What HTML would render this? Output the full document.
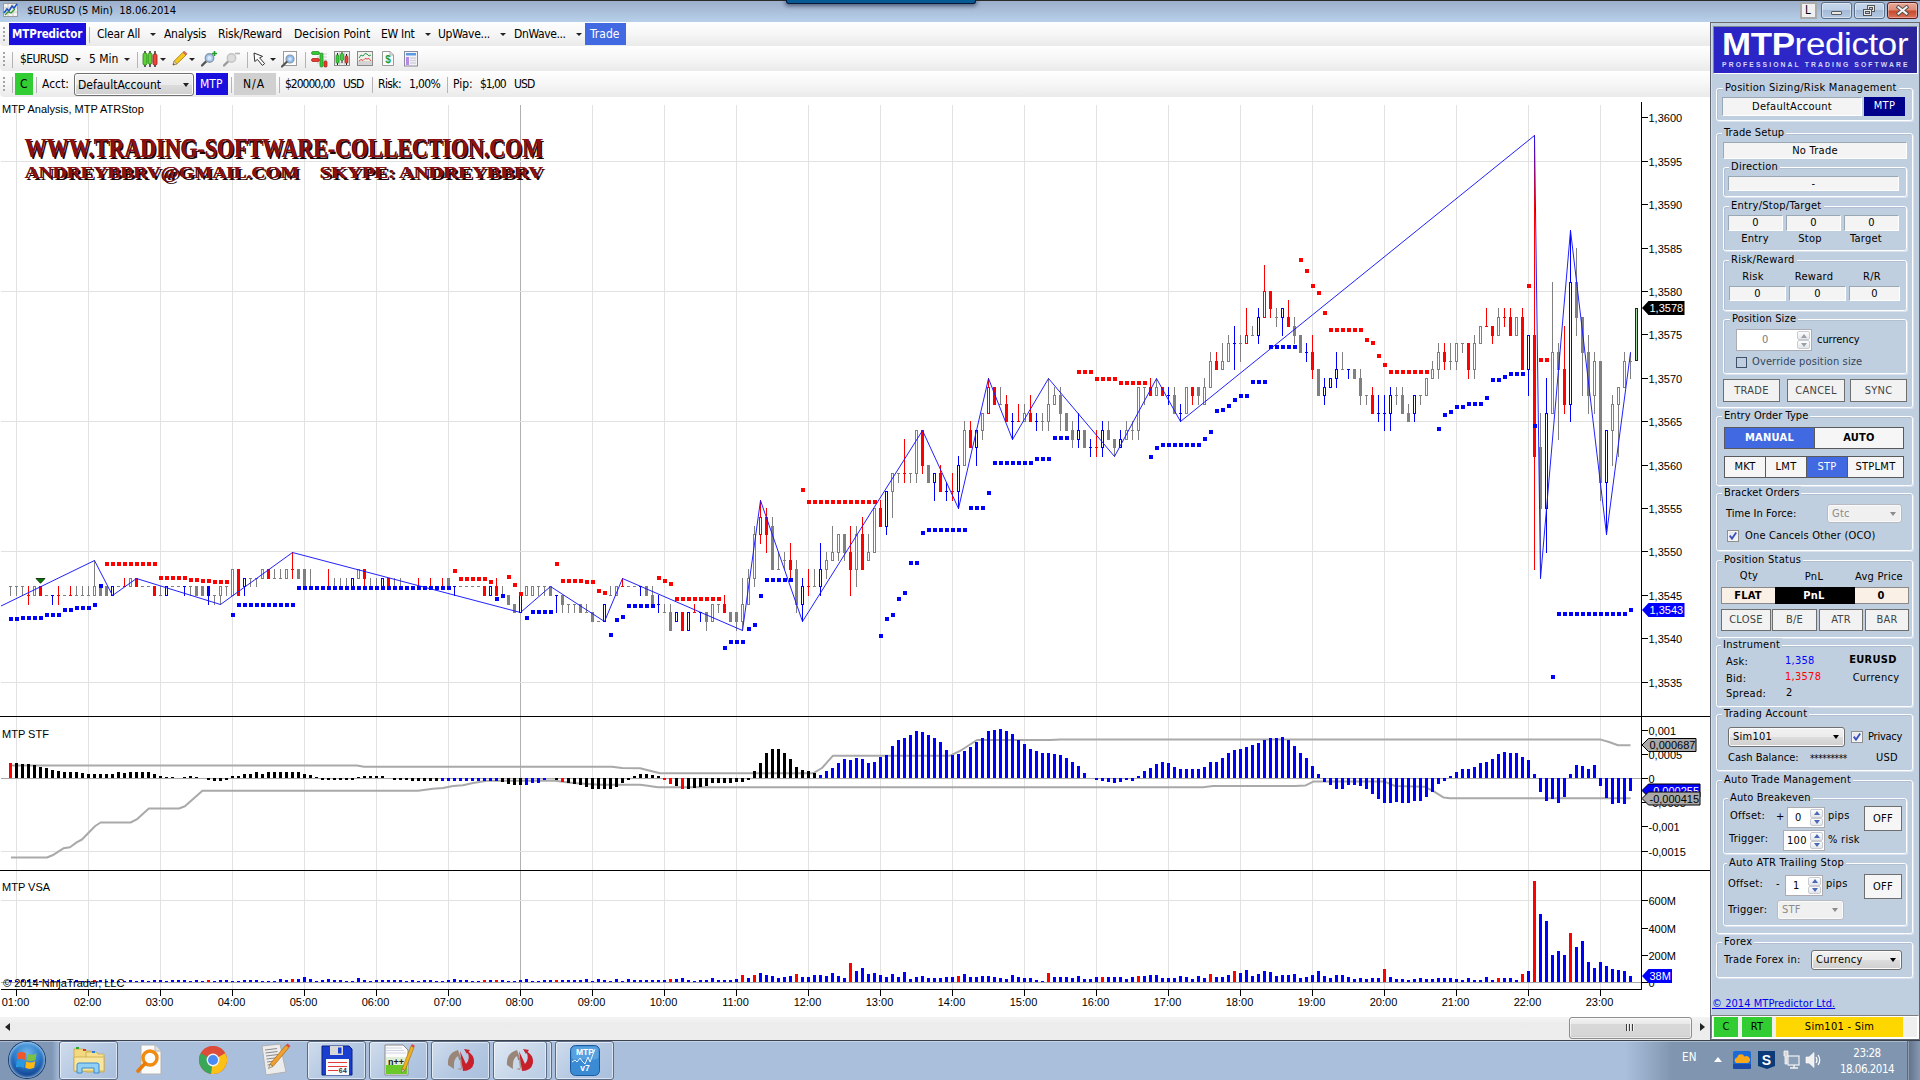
<!DOCTYPE html>
<html lang="en"><head><meta charset="utf-8"><title>$EURUSD (5 Min) 18.06.2014</title>
<style>
html,body{margin:0;padding:0;}
body{width:1920px;height:1080px;overflow:hidden;position:relative;background:#fff;font-family:"DejaVu Sans Condensed","Liberation Sans",sans-serif;font-size:11px;letter-spacing:.27px;color:#000;}
.a{position:absolute;white-space:pre;}
.t{position:absolute;white-space:pre;line-height:14px;height:14px;}
.c{text-align:center;}
#titlebar{left:0;top:0;width:1920px;height:22px;background:linear-gradient(#9cb0cb 0,#a6bad5 35%,#b1c8e3 75%,#b8d0ea 100%);border-top:1px solid #2b2b2b;box-sizing:border-box;}
.tb{left:0;width:1710px;height:24px;background:linear-gradient(#fefefe 0,#f6f6f6 50%,#eaeaea 100%);border-radius:4px 0 0 4px;}
.tbt,svg{letter-spacing:0;}
.tbt{font-family:"DejaVu Sans Condensed","Liberation Sans",sans-serif;font-size:12px;line-height:16px;}
.grip{width:2px;height:15px;background:repeating-linear-gradient(#a4a4a4 0,#a4a4a4 2px,transparent 2px,transparent 4px);}
.sep{width:1px;height:16px;background:#b4b4b4;}
.dd{width:0;height:0;border-left:3px solid transparent;border-right:3px solid transparent;border-top:3px solid #222;}
.ax{font-family:"Liberation Sans",sans-serif;font-size:11px;line-height:12px;}
/* right panel */
#panel{left:1709px;top:22px;width:211px;height:1018px;background:#c0cfe0;}
.gb{position:absolute;border:1px solid #fff;border-radius:2.5px;box-shadow:inset 1px 1px 0 #b0bfd2, 1px 1px 0 #d9e2ee;}
.gl{position:absolute;background:#c0cfe0;padding:0 2px;line-height:13px;white-space:pre;}
.fld{position:absolute;background:#f4f4f4;border:1px solid #9aa7b5;border-right-color:#fff;border-bottom-color:#fff;box-sizing:border-box;text-align:center;line-height:13px;}
.btn{position:absolute;background:#f2f2f2;border:1px solid #6f6f6f;box-sizing:border-box;text-align:center;color:#444;}
.spin{position:absolute;background:#fff;border:1px solid #abadb3;box-sizing:border-box;}
.tkb{box-sizing:border-box;border:1px solid #5b6c84;border-radius:3px;background:linear-gradient(135deg,#cfdcec 0,#b4c8e2 55%,#a9bfdc 100%);box-shadow:inset 0 0 0 1px rgba(255,255,255,.55);}
.wm{font-family:'Liberation Serif','DejaVu Serif',serif;font-weight:bold;color:#8e1010;text-shadow:1.5px 1.5px 0 #1a0505,-0.5px -0.5px 0 #3a0a0a;transform-origin:0 0;letter-spacing:0;}
</style></head><body>
<!-- ===== title bar ===== -->
<div id="titlebar" class="a"></div>
<div class="a" style="left:786px;top:0;width:190px;height:4px;background:#055a94;border:1px solid #08183a;border-top:0;border-radius:0 0 3px 3px;box-sizing:border-box;box-shadow:0 1px 4px 1px rgba(10,20,50,.55);"></div>
<svg class="a" style="left:3px;top:3px" width="16" height="15" viewBox="0 0 16 15"><rect x="0.5" y="0.5" width="14" height="13" fill="#f4f4f0" stroke="#9a9a9a"/><path d="M1 5h13M1 9h13M5 1v12M10 1v12" stroke="#c9c9c9" stroke-width="1"/><path d="M1 10 L4 6 L6 8 L9 3 L11 5 L14 1" fill="none" stroke="#1a50c8" stroke-width="1.6"/><path d="M2 12 L5 9 L8 10 L12 6" fill="none" stroke="#2a9a2a" stroke-width="1.2"/></svg>
<div class="t" style="left:27px;top:4px;font-size:11.2px;letter-spacing:-0.08px;">$EURUSD (5 Min)  18.06.2014</div>
<!-- window buttons -->
<div class="a" style="left:1800px;top:2px;width:17px;height:17px;background:#f0f0f0;border:2px solid #a9a9a9;box-sizing:border-box;"></div>
<div class="t" style="left:1805px;top:3px;font-size:11.5px;">L</div>
<div class="a" style="left:1821px;top:2px;width:31px;height:17px;border:1px solid #5b6f8a;border-radius:3px;box-sizing:border-box;background:linear-gradient(#c5d6ea 0,#bccfe6 50%,#a3bad6 50%,#b5c9e2 100%);box-shadow:inset 0 0 0 1px rgba(255,255,255,.45);"></div>
<div class="a" style="left:1831px;top:11px;width:11px;height:4px;background:#e8e8e8;border:1px solid #5a5a5a;border-radius:1px;box-sizing:border-box;"></div>
<div class="a" style="left:1854px;top:2px;width:31px;height:17px;border:1px solid #5b6f8a;border-radius:3px;box-sizing:border-box;background:linear-gradient(#c5d6ea 0,#bccfe6 50%,#a3bad6 50%,#b5c9e2 100%);box-shadow:inset 0 0 0 1px rgba(255,255,255,.45);"></div>
<svg class="a" style="left:1863px;top:5px" width="13" height="12" viewBox="0 0 13 12"><rect x="4.5" y="0.5" width="7" height="6" fill="#e8e8e8" stroke="#555"/><rect x="6.5" y="2.5" width="3" height="2" fill="#b9cbe2" stroke="#555"/><rect x="0.5" y="4.5" width="8" height="6" fill="#e8e8e8" stroke="#555"/><rect x="2.5" y="6.5" width="4" height="2" fill="#b9cbe2" stroke="#555"/></svg>
<div class="a" style="left:1887px;top:2px;width:31px;height:17px;border:1px solid #5a1a1a;border-radius:3px;box-sizing:border-box;background:linear-gradient(#e8a898 0,#dc8a76 48%,#c8482a 52%,#d9725a 100%);box-shadow:inset 0 0 0 1px rgba(255,255,255,.35);"></div>
<svg class="a" style="left:1896px;top:5px" width="13" height="11" viewBox="0 0 13 11"><path d="M2.500 2.200 L10.500 8.600 M10.500 2.200 L2.500 8.600" stroke="#4a4a4a" stroke-width="3.800" stroke-linecap="square"/><path d="M2.500 2.200 L10.500 8.600 M10.500 2.200 L2.500 8.600" stroke="#f2f2f2" stroke-width="2.100" stroke-linecap="square"/></svg>

<!-- ===== toolbar row 1 ===== -->
<div class="a tb" style="top:22px;"></div>
<div class="a grip" style="left:3px;top:27px;"></div>
<div class="a" style="left:9px;top:23px;width:77px;height:22px;background:#1a0fdc;"></div>
<div class="t tbt" style="left:12px;top:26px;color:#fff;font-weight:bold;font-size:11.5px;letter-spacing:-0.1px">MTPredictor</div>
<div class="a sep" style="left:89px;top:27px;"></div>
<div class="t tbt" style="left:97px;top:26px;letter-spacing:-0.22px;">Clear All</div>
<div class="a dd" style="left:150px;top:33px;"></div>
<div class="t tbt" style="left:164px;top:26px;letter-spacing:-0.3px;">Analysis</div>
<div class="t tbt" style="left:218px;top:26px;letter-spacing:-0.2px;">Risk/Reward</div>
<div class="t tbt" style="left:294px;top:26px;">Decision Point</div>
<div class="t tbt" style="left:381px;top:26px;letter-spacing:-0.28px;">EW Int</div>
<div class="a dd" style="left:425px;top:33px;"></div>
<div class="t tbt" style="left:438px;top:26px;letter-spacing:-0.29px;">UpWave...</div>
<div class="a dd" style="left:500px;top:33px;"></div>
<div class="t tbt" style="left:514px;top:26px;letter-spacing:-0.38px;">DnWave...</div>
<div class="a dd" style="left:576px;top:33px;"></div>
<div class="a" style="left:585px;top:23px;width:41px;height:22px;background:#4169e1;"></div>
<div class="t tbt" style="left:590px;top:26px;color:#fff;">Trade</div>

<!-- ===== toolbar row 2 ===== -->
<div class="a tb" style="top:47px;"></div>
<div class="a grip" style="left:3px;top:52px;"></div>
<div class="a sep" style="left:12px;top:52px;"></div>
<div class="t tbt" style="left:20px;top:51px;letter-spacing:-0.6px;">$EURUSD</div>
<div class="a dd" style="left:75px;top:58px;"></div>
<div class="t tbt" style="left:89px;top:51px;">5 Min</div>
<div class="a dd" style="left:124px;top:58px;"></div>
<div class="a sep" style="left:137px;top:52px;"></div>
<!-- candles icon -->
<svg class="a" style="left:142px;top:51px" width="16" height="17" viewBox="0 0 16 17"><path d="M3 0v16M8 0v16M13 0v16" stroke="#222" stroke-width="1.4"/><rect x="1" y="2" width="4" height="12" rx="1.5" fill="#5fd23a" stroke="#2a7a18" stroke-width=".8"/><rect x="6" y="2" width="4" height="11" rx="1.5" fill="#5fd23a" stroke="#2a7a18" stroke-width=".8"/><rect x="11" y="3" width="4" height="11" rx="1.5" fill="#f0463a" stroke="#8a1a12" stroke-width=".8"/></svg>
<div class="a dd" style="left:160px;top:58px;"></div>
<!-- pencil -->
<svg class="a" style="left:171px;top:51px" width="17" height="16" viewBox="0 0 17 16"><path d="M2 14 L3.2 10 L12 1.2 L15 4 L6 12.8 Z" fill="#f4c81e" stroke="#a8780a" stroke-width=".8"/><path d="M12 1.2 L13.4 0.2 L16 2.8 L15 4 Z" fill="#e87a6a" stroke="#a8483a" stroke-width=".6"/><path d="M2 14 L3.2 10 L6 12.8 Z" fill="#e8d8b8" stroke="#8a7a5a" stroke-width=".6"/><path d="M2 14 L2.6 12.2 L3.8 13.4Z" fill="#444"/></svg>
<div class="a dd" style="left:189px;top:58px;"></div>
<!-- zoom in -->
<svg class="a" style="left:201px;top:50px" width="17" height="17" viewBox="0 0 17 17"><path d="M1 15.5 L6 10.5" stroke="#555" stroke-width="2.4" stroke-linecap="round"/><circle cx="8.5" cy="8" r="4.2" fill="#a8cdf0" stroke="#8a98a8" stroke-width="1.4"/><circle cx="8.5" cy="8" r="2" fill="#dbeafa"/><path d="M13.5 1v5M11 3.5h5" stroke="#1f9a2f" stroke-width="1.6"/></svg>
<svg class="a" style="left:223px;top:50px" width="18" height="17" viewBox="0 0 18 17"><path d="M1 15.5 L6 10.5" stroke="#9a9a9a" stroke-width="2.4" stroke-linecap="round"/><circle cx="8.5" cy="8" r="4.2" fill="#dcdcdc" stroke="#c4c4c4" stroke-width="1.4"/><path d="M12 3.5h5" stroke="#b4b4b4" stroke-width="1.6"/></svg>
<div class="a sep" style="left:247px;top:52px;"></div>
<!-- cursor -->
<svg class="a" style="left:253px;top:52px" width="14" height="15" viewBox="0 0 14 15"><path d="M1 1 L1.8 9.5 L4.4 7.4 L9.4 13.4 L11.6 11.6 L6.6 5.8 L9.6 4.4 Z" fill="#fff" stroke="#333" stroke-width="1"/></svg>
<div class="a dd" style="left:270px;top:58px;"></div>
<!-- zoom box -->
<svg class="a" style="left:281px;top:50px" width="17" height="18" viewBox="0 0 17 18"><rect x="2.5" y="1.5" width="13" height="14" fill="#fdfdfd" stroke="#9a9a9a"/><circle cx="9" cy="9" r="4" fill="#8fbef0" stroke="#8a98a8" stroke-width="1.2"/><circle cx="9" cy="9" r="1.8" fill="#d4e6fa"/><path d="M1 16.5 L5.6 12" stroke="#555" stroke-width="2.2" stroke-linecap="round"/></svg>
<div class="a sep" style="left:305px;top:52px;"></div>
<!-- icon: orders/bars -->
<svg class="a" style="left:311px;top:50px" width="17" height="18" viewBox="0 0 17 18"><path d="M6 4h10M6 7h10M6 10h10M6 13h10" stroke="#cfcfcf"/><rect x="0.5" y="1.5" width="8" height="3" rx="1.5" fill="#38c838" stroke="#1a8a1a" stroke-width=".7"/><rect x="0.5" y="8.500" width="8" height="3" rx="1.5" fill="#f03a30" stroke="#9a1a12" stroke-width=".7"/><rect x="9" y="3" width="3" height="14" rx="1.2" fill="#38c838" stroke="#1a8a1a" stroke-width=".7"/><rect x="13" y="11" width="3" height="6" rx="1" fill="#f03a30" stroke="#9a1a12" stroke-width=".7"/></svg>
<!-- icon: candles box -->
<svg class="a" style="left:334px;top:51px" width="17" height="16" viewBox="0 0 17 16"><rect x="0.500" y="0.500" width="15" height="14" fill="#f0f0f0" stroke="#8a8a8a"/><path d="M1 4h14M1 8h14M1 12h14M5.500 1v13M10.500 1v13" stroke="#cacaca" stroke-width=".8"/><path d="M3.500 2v12M8 1v11M12.500 3v11" stroke="#222"/><rect x="2" y="4" width="3" height="8" rx="1" fill="#3cd03c" stroke="#1a7a1a" stroke-width=".6"/><rect x="6.500" y="2.500" width="3" height="7" rx="1" fill="#3cd03c" stroke="#1a7a1a" stroke-width=".6"/><rect x="11" y="5" width="3" height="7" rx="1" fill="#f0463a" stroke="#8a1a12" stroke-width=".6"/></svg>
<!-- icon: line chart box -->
<svg class="a" style="left:357px;top:51px" width="17" height="16" viewBox="0 0 17 16"><rect x="0.500" y="0.500" width="15" height="14" fill="#d4d4d4" stroke="#8a8a8a"/><rect x="1" y="1" width="14" height="9" fill="#f0f0ee"/><path d="M2 7 L4 4 L6 5 L8 2.500 L10 3 L12 5 L14 4" fill="none" stroke="#2a9a4a" stroke-width="1"/><path d="M2 10 L4 8.500 L6 9.500 L8 7.500 L10 8 L12 7.500 L14 10" fill="none" stroke="#e0483a" stroke-width="1"/></svg>
<!-- icon: $ doc -->
<svg class="a" style="left:381px;top:51px" width="14" height="16" viewBox="0 0 14 16"><path d="M1.500 0.500 H9 L12.500 4 V14.500 H1.500 Z" fill="#fbfbfb" stroke="#9a9a9a"/><path d="M9 0.500 V4 H12.500" fill="none" stroke="#9a9a9a" stroke-width=".8"/><text x="7" y="12" font-family="Liberation Sans,sans-serif" font-weight="bold" font-size="10" text-anchor="middle" fill="#1f9a2f">$</text></svg>
<!-- icon: table -->
<svg class="a" style="left:404px;top:51px" width="15" height="16" viewBox="0 0 15 16"><rect x="0.500" y="0.500" width="13" height="14.500" fill="#f4f4f8" stroke="#8a8a9a"/><rect x="2" y="2" width="10" height="2.500" fill="#5a9ae0"/><rect x="2" y="6" width="3" height="8" fill="#b48ae8"/><path d="M6 7h6M6 9.500h6M6 12h6" stroke="#d0d0da" stroke-width="1.4"/></svg>

<!-- ===== toolbar row 3 ===== -->
<div class="a tb" style="top:72px;height:25px;"></div>
<div class="a grip" style="left:3px;top:77px;"></div>
<div class="a sep" style="left:12px;top:77px;"></div>
<div class="a" style="left:15px;top:73px;width:18px;height:22px;background:#32cd32;"></div>
<div class="t tbt" style="left:20px;top:76px;">C</div>
<div class="a sep" style="left:36px;top:77px;"></div>
<div class="t tbt" style="left:42px;top:76px;">Acct:</div>
<div class="a" style="left:74px;top:73px;width:120px;height:23px;border:1px solid #707070;border-radius:3px;box-sizing:border-box;background:linear-gradient(#f2f2f2 0,#ebebeb 50%,#dddddd 50%,#cfcfcf 100%);box-shadow:inset 0 0 0 1px #fcfcfc;"></div>
<div class="t tbt" style="left:78px;top:77px;">DefaultAccount</div>
<div class="a dd" style="left:183px;top:83px;border-left-width:3.5px;border-right-width:3.5px;border-top-width:4px"></div>
<div class="a" style="left:196px;top:73px;width:32px;height:22px;background:#1a0fdc;"></div>
<div class="t tbt" style="left:200px;top:76px;color:#fff;">MTP</div>
<div class="a sep" style="left:231px;top:77px;"></div>
<div class="a" style="left:234px;top:73px;width:42px;height:22px;background:#d0d0d0;"></div>
<div class="t tbt" style="left:243px;top:76px;letter-spacing:1.0px;">N/A</div>
<div class="a sep" style="left:279px;top:77px;"></div>
<div class="t tbt" style="left:285px;top:76px;letter-spacing:-1.0px;">$20000,00</div>
<div class="t tbt" style="left:343px;top:76px;letter-spacing:-0.85px;">USD</div>
<div class="a sep" style="left:372px;top:77px;"></div>
<div class="t tbt" style="left:378px;top:76px;letter-spacing:-0.6px;">Risk:</div>
<div class="t tbt" style="left:409px;top:76px;letter-spacing:-0.66px;">1,00%</div>
<div class="a sep" style="left:447px;top:77px;"></div>
<div class="t tbt" style="left:453px;top:76px;">Pip:</div>
<div class="t tbt" style="left:480px;top:76px;letter-spacing:-1.08px;">$1,00</div>
<div class="t tbt" style="left:514px;top:76px;letter-spacing:-0.85px;">USD</div>
<!-- ===== chart ===== -->
<svg class="a" style="left:0;top:97px" width="1710" height="920" viewBox="0 97 1710 920">
<rect x="0" y="97" width="1710" height="920" fill="#fff"/>
<g shape-rendering="crispEdges" fill="#e1e1e1">
<rect x="16" y="105" width="1" height="884" fill="#e2e2e2"/>
<rect x="88" y="105" width="1" height="884" fill="#e2e2e2"/>
<rect x="160" y="105" width="1" height="884" fill="#e2e2e2"/>
<rect x="232" y="105" width="1" height="884" fill="#e2e2e2"/>
<rect x="304" y="105" width="1" height="884" fill="#e2e2e2"/>
<rect x="376" y="105" width="1" height="884" fill="#e2e2e2"/>
<rect x="448" y="105" width="1" height="884" fill="#e2e2e2"/>
<rect x="520" y="105" width="1" height="884" fill="#b0b0b0"/>
<rect x="592" y="105" width="1" height="884" fill="#e2e2e2"/>
<rect x="664" y="105" width="1" height="884" fill="#e2e2e2"/>
<rect x="736" y="105" width="1" height="884" fill="#e2e2e2"/>
<rect x="808" y="105" width="1" height="884" fill="#e2e2e2"/>
<rect x="880" y="105" width="1" height="884" fill="#e2e2e2"/>
<rect x="952" y="105" width="1" height="884" fill="#e2e2e2"/>
<rect x="1024" y="105" width="1" height="884" fill="#e2e2e2"/>
<rect x="1096" y="105" width="1" height="884" fill="#e2e2e2"/>
<rect x="1168" y="105" width="1" height="884" fill="#e2e2e2"/>
<rect x="1240" y="105" width="1" height="884" fill="#e2e2e2"/>
<rect x="1312" y="105" width="1" height="884" fill="#e2e2e2"/>
<rect x="1384" y="105" width="1" height="884" fill="#e2e2e2"/>
<rect x="1456" y="105" width="1" height="884" fill="#e2e2e2"/>
<rect x="1528" y="105" width="1" height="884" fill="#e2e2e2"/>
<rect x="1600" y="105" width="1" height="884" fill="#e2e2e2"/>
<rect x="1" y="682" width="1639" height="1" fill="#e1e1e1"/>
<rect x="1" y="551" width="1639" height="1" fill="#e1e1e1"/>
<rect x="1" y="421" width="1639" height="1" fill="#e1e1e1"/>
<rect x="1" y="291" width="1639" height="1" fill="#e1e1e1"/>
<rect x="1" y="161" width="1639" height="1" fill="#e1e1e1"/>
<rect x="1" y="851" width="1640" height="1" fill="#e1e1e1"/>
<rect x="1" y="900" width="1640" height="1" fill="#e1e1e1"/>
</g>
<g shape-rendering="crispEdges"><rect x="1" y="778" width="1640" height="1" fill="#a9a9a9"/><rect x="1" y="982" width="1640" height="1" fill="#a9a9a9"/></g>
<polyline fill="none" stroke="#a9a9a9" stroke-width="2" stroke-linejoin="round" points="11,765.6 357,765.6 364,766.7 612,766.7 622,768 640,768.3 660,773.3 813,773.3 822,768 833,755.7 950,755.7 960,751 977,740 1050,740 1060,739.4 1600,739.4 1609,742 1618,745.2 1630.5,745.2"/>
<polyline fill="none" stroke="#a9a9a9" stroke-width="2" stroke-linejoin="round" points="11,857.5 47,857.5 52.5,855.3 63.4,848.3 70,847.2 76.6,842.4 82,839.5 95.2,826 100.6,822.5 130.6,822.5 136.7,819.4 148.8,808.5 179,808.5 184.9,806.3 202.4,790.8 418,790.8 433,788.7 443,788 453,786 463,785.3 473,783 487,780.7 553,780.5 573,783 600,784.7 640,784.7 646,785.5 658,787.3 1203,787.3 1213,786 1295,786 1305.6,785.4 1313.8,781.4 1384,781.4 1395,786 1424.8,786.8 1433,790.8 1443.8,797.6 1450,798.2 1630.7,798.2"/>
<g shape-rendering="crispEdges">
<path fill="#000000" d="M15 763h3v15h-3zM21 764h3v14h-3zM27 764h3v14h-3zM33 765h3v13h-3zM39 767h3v11h-3zM45 768h3v10h-3zM51 770h3v8h-3zM57 771h3v7h-3zM63 772h3v6h-3zM69 772h3v6h-3zM75 772h3v6h-3zM81 773h3v5h-3zM87 774h3v4h-3zM93 774h3v4h-3zM99 774h3v4h-3zM105 774h3v4h-3zM111 774h3v4h-3zM117 772h3v6h-3zM123 773h3v5h-3zM129 772h3v6h-3zM135 772h3v6h-3zM141 772h3v6h-3zM147 772h3v6h-3zM153 774h3v4h-3zM159 776h3v2h-3zM165 777h3v1h-3zM171 777h3v1h-3zM183 777h3v1h-3zM189 776h3v2h-3zM195 777h3v1h-3zM207 778h3v2h-3zM213 778h3v3h-3zM219 778h3v3h-3zM225 778h3v2h-3zM231 776h3v2h-3zM237 776h3v2h-3zM243 774h3v4h-3zM249 774h3v4h-3zM255 772h3v6h-3zM261 774h3v4h-3zM267 772h3v6h-3zM273 772h3v6h-3zM279 772h3v6h-3zM285 772h3v6h-3zM291 772h3v6h-3zM297 772h3v6h-3zM303 774h3v4h-3zM309 775h3v3h-3zM315 777h3v1h-3zM321 778h3v2h-3zM327 778h3v2h-3zM333 778h3v2h-3zM339 778h3v2h-3zM345 778h3v2h-3zM351 778h3v2h-3zM357 777h3v1h-3zM363 776h3v2h-3zM369 776h3v2h-3zM375 776h3v2h-3zM381 776h3v2h-3zM393 778h3v2h-3zM399 778h3v2h-3zM405 778h3v2h-3zM411 778h3v3h-3zM417 778h3v3h-3zM423 778h3v3h-3zM429 778h3v3h-3zM435 778h3v3h-3zM501 778h3v4h-3zM507 778h3v6h-3zM513 778h3v7h-3zM519 778h3v7h-3zM555 778h3v2h-3zM567 778h3v5h-3zM573 778h3v6h-3zM579 778h3v7h-3zM585 778h3v9h-3zM591 778h3v11h-3zM597 778h3v11h-3zM603 778h3v11h-3zM609 778h3v11h-3zM615 778h3v9h-3zM621 778h3v5h-3zM627 778h3v2h-3zM633 776h3v2h-3zM639 774h3v4h-3zM645 774h3v4h-3zM651 775h3v3h-3zM657 776h3v2h-3zM675 778h3v8h-3zM687 778h3v11h-3zM693 778h3v10h-3zM699 778h3v9h-3zM705 778h3v8h-3zM711 778h3v5h-3zM717 778h3v5h-3zM723 778h3v5h-3zM729 778h3v5h-3zM735 778h3v4h-3zM741 778h3v4h-3zM747 778h3v2h-3zM753 771h3v7h-3zM759 763h3v15h-3zM765 753h3v25h-3zM771 749h3v29h-3zM777 749h3v29h-3zM783 753h3v25h-3zM789 759h3v19h-3zM795 767h3v11h-3zM801 770h3v8h-3zM807 771h3v7h-3zM813 773h3v5h-3z"/>
<path fill="#ff0000" d="M9 763h3v15h-3zM561 778h3v4h-3zM663 778h3v2h-3zM669 778h3v6h-3zM681 778h3v11h-3z"/>
<path fill="#0000ff" d="M441 778h3v3h-3zM447 778h3v3h-3zM453 778h3v3h-3zM459 778h3v3h-3zM465 778h3v3h-3zM471 778h3v3h-3zM477 778h3v3h-3zM483 778h3v3h-3zM489 778h3v3h-3zM495 778h3v3h-3zM525 778h3v7h-3zM531 778h3v5h-3zM537 778h3v5h-3zM543 778h3v2h-3zM819 775h3v3h-3zM825 771h3v7h-3zM831 768h3v10h-3zM837 763h3v15h-3zM843 759h3v19h-3zM849 760h3v18h-3zM855 758h3v20h-3zM861 759h3v19h-3zM867 763h3v15h-3zM873 762h3v16h-3zM879 757h3v21h-3zM885 755h3v23h-3zM891 746h3v32h-3zM897 740h3v38h-3zM903 738h3v40h-3zM909 735h3v43h-3zM915 731h3v47h-3zM921 732h3v46h-3zM927 735h3v43h-3zM933 738h3v40h-3zM939 742h3v36h-3zM945 750h3v28h-3zM951 755h3v23h-3zM957 754h3v24h-3zM963 751h3v27h-3zM969 747h3v31h-3zM975 742h3v36h-3zM981 738h3v40h-3zM987 731h3v47h-3zM993 730h3v48h-3zM999 729h3v49h-3zM1005 731h3v47h-3zM1011 734h3v44h-3zM1017 740h3v38h-3zM1023 744h3v34h-3zM1029 749h3v29h-3zM1035 751h3v27h-3zM1041 753h3v25h-3zM1047 753h3v25h-3zM1053 754h3v24h-3zM1059 755h3v23h-3zM1065 758h3v20h-3zM1071 762h3v16h-3zM1077 766h3v12h-3zM1083 773h3v5h-3zM1095 778h3v2h-3zM1101 778h3v3h-3zM1107 778h3v4h-3zM1113 778h3v5h-3zM1119 778h3v4h-3zM1125 778h3v2h-3zM1131 778h3v3h-3zM1137 776h3v2h-3zM1143 771h3v7h-3zM1149 768h3v10h-3zM1155 764h3v14h-3zM1161 762h3v16h-3zM1167 763h3v15h-3zM1173 767h3v11h-3zM1179 769h3v9h-3zM1185 769h3v9h-3zM1191 769h3v9h-3zM1197 769h3v9h-3zM1203 767h3v11h-3zM1209 762h3v16h-3zM1215 762h3v16h-3zM1221 758h3v20h-3zM1227 753h3v25h-3zM1233 750h3v28h-3zM1239 749h3v29h-3zM1245 747h3v31h-3zM1251 745h3v33h-3zM1257 743h3v35h-3zM1263 740h3v38h-3zM1269 738h3v40h-3zM1275 738h3v40h-3zM1281 737h3v41h-3zM1287 740h3v38h-3zM1293 746h3v32h-3zM1299 753h3v25h-3zM1305 758h3v20h-3zM1311 766h3v12h-3zM1317 774h3v4h-3zM1323 778h3v4h-3zM1329 778h3v7h-3zM1335 778h3v11h-3zM1341 778h3v11h-3zM1347 778h3v7h-3zM1353 778h3v7h-3zM1359 778h3v8h-3zM1365 778h3v11h-3zM1371 778h3v16h-3zM1377 778h3v21h-3zM1383 778h3v25h-3zM1389 778h3v25h-3zM1395 778h3v24h-3zM1401 778h3v25h-3zM1407 778h3v25h-3zM1413 778h3v23h-3zM1419 778h3v23h-3zM1425 778h3v19h-3zM1431 778h3v14h-3zM1437 778h3v6h-3zM1443 778h3v3h-3zM1449 776h3v2h-3zM1455 772h3v6h-3zM1461 769h3v9h-3zM1467 769h3v9h-3zM1473 767h3v11h-3zM1479 763h3v15h-3zM1485 762h3v16h-3zM1491 759h3v19h-3zM1497 754h3v24h-3zM1503 752h3v26h-3zM1509 753h3v25h-3zM1515 753h3v25h-3zM1521 757h3v21h-3zM1527 760h3v18h-3zM1533 774h3v4h-3zM1539 778h3v14h-3zM1545 778h3v23h-3zM1551 778h3v21h-3zM1557 778h3v25h-3zM1563 778h3v19h-3zM1569 774h3v4h-3zM1575 765h3v13h-3zM1581 766h3v12h-3zM1587 769h3v9h-3zM1593 765h3v13h-3zM1599 778h3v8h-3zM1605 778h3v20h-3zM1611 778h3v26h-3zM1617 778h3v25h-3zM1623 778h3v26h-3zM1629 778h3v13h-3z"/>
<path fill="#ff0000" d="M93 980h3v2h-3zM207 980h3v2h-3zM291 979h3v3h-3zM483 980h3v2h-3zM495 980h3v2h-3zM555 980h3v2h-3zM669 979h3v3h-3zM741 975h3v7h-3zM753 975h3v7h-3zM795 974h3v8h-3zM849 963h3v19h-3zM957 976h3v6h-3zM1047 973h3v9h-3zM1101 977h3v5h-3zM1137 976h3v6h-3zM1209 974h3v8h-3zM1233 971h3v11h-3zM1383 969h3v13h-3zM1497 978h3v4h-3zM1521 974h3v8h-3zM1533 881h3v101h-3zM1569 933h3v49h-3z"/>
<path fill="#0000ff" d="M9 980h3v2h-3zM15 981h3v1h-3zM21 980h3v2h-3zM27 980h3v2h-3zM33 980h3v2h-3zM39 981h3v1h-3zM45 981h3v1h-3zM51 980h3v2h-3zM57 980h3v2h-3zM63 981h3v1h-3zM69 981h3v1h-3zM75 980h3v2h-3zM81 981h3v1h-3zM87 981h3v1h-3zM99 980h3v2h-3zM105 981h3v1h-3zM111 980h3v2h-3zM117 981h3v1h-3zM123 981h3v1h-3zM129 980h3v2h-3zM135 981h3v1h-3zM141 980h3v2h-3zM147 981h3v1h-3zM153 980h3v2h-3zM159 980h3v2h-3zM165 981h3v1h-3zM171 980h3v2h-3zM177 980h3v2h-3zM183 980h3v2h-3zM189 981h3v1h-3zM195 980h3v2h-3zM201 981h3v1h-3zM213 981h3v1h-3zM219 980h3v2h-3zM225 980h3v2h-3zM231 981h3v1h-3zM237 981h3v1h-3zM243 980h3v2h-3zM249 980h3v2h-3zM255 980h3v2h-3zM261 981h3v1h-3zM267 981h3v1h-3zM273 981h3v1h-3zM279 979h3v3h-3zM285 980h3v2h-3zM297 979h3v3h-3zM303 977h3v5h-3zM309 979h3v3h-3zM315 981h3v1h-3zM321 980h3v2h-3zM327 979h3v3h-3zM333 980h3v2h-3zM339 980h3v2h-3zM345 981h3v1h-3zM351 981h3v1h-3zM357 978h3v4h-3zM363 980h3v2h-3zM369 981h3v1h-3zM375 980h3v2h-3zM381 980h3v2h-3zM387 980h3v2h-3zM393 980h3v2h-3zM399 980h3v2h-3zM405 981h3v1h-3zM411 980h3v2h-3zM417 981h3v1h-3zM423 980h3v2h-3zM429 980h3v2h-3zM435 981h3v1h-3zM441 981h3v1h-3zM447 980h3v2h-3zM453 979h3v3h-3zM459 980h3v2h-3zM465 980h3v2h-3zM471 981h3v1h-3zM477 981h3v1h-3zM489 980h3v2h-3zM501 980h3v2h-3zM507 981h3v1h-3zM513 981h3v1h-3zM519 980h3v2h-3zM525 979h3v3h-3zM531 981h3v1h-3zM537 981h3v1h-3zM543 980h3v2h-3zM549 980h3v2h-3zM561 980h3v2h-3zM567 980h3v2h-3zM573 980h3v2h-3zM579 980h3v2h-3zM585 979h3v3h-3zM591 981h3v1h-3zM597 979h3v3h-3zM603 980h3v2h-3zM609 981h3v1h-3zM615 979h3v3h-3zM621 981h3v1h-3zM627 979h3v3h-3zM633 980h3v2h-3zM639 980h3v2h-3zM645 980h3v2h-3zM651 980h3v2h-3zM657 980h3v2h-3zM663 980h3v2h-3zM675 979h3v3h-3zM681 978h3v4h-3zM687 980h3v2h-3zM693 981h3v1h-3zM699 980h3v2h-3zM705 980h3v2h-3zM711 978h3v4h-3zM717 980h3v2h-3zM723 980h3v2h-3zM729 980h3v2h-3zM735 979h3v3h-3zM747 978h3v4h-3zM759 973h3v9h-3zM765 975h3v7h-3zM771 976h3v6h-3zM777 978h3v4h-3zM783 977h3v5h-3zM789 976h3v6h-3zM801 977h3v5h-3zM807 977h3v5h-3zM813 975h3v7h-3zM819 975h3v7h-3zM825 976h3v6h-3zM831 973h3v9h-3zM837 976h3v6h-3zM843 978h3v4h-3zM855 971h3v11h-3zM861 968h3v14h-3zM867 974h3v8h-3zM873 973h3v9h-3zM879 975h3v7h-3zM885 977h3v5h-3zM891 974h3v8h-3zM897 977h3v5h-3zM903 972h3v10h-3zM909 979h3v3h-3zM915 977h3v5h-3zM921 976h3v6h-3zM927 978h3v4h-3zM933 978h3v4h-3zM939 978h3v4h-3zM945 977h3v5h-3zM951 977h3v5h-3zM963 974h3v8h-3zM969 977h3v5h-3zM975 977h3v5h-3zM981 976h3v6h-3zM987 976h3v6h-3zM993 977h3v5h-3zM999 978h3v4h-3zM1005 979h3v3h-3zM1011 975h3v7h-3zM1017 977h3v5h-3zM1023 978h3v4h-3zM1029 978h3v4h-3zM1035 980h3v2h-3zM1041 981h3v1h-3zM1053 977h3v5h-3zM1059 977h3v5h-3zM1065 977h3v5h-3zM1071 978h3v4h-3zM1077 976h3v6h-3zM1083 979h3v3h-3zM1089 979h3v3h-3zM1095 977h3v5h-3zM1107 977h3v5h-3zM1113 977h3v5h-3zM1119 977h3v5h-3zM1125 979h3v3h-3zM1131 977h3v5h-3zM1143 976h3v6h-3zM1149 975h3v7h-3zM1155 975h3v7h-3zM1161 978h3v4h-3zM1167 978h3v4h-3zM1173 978h3v4h-3zM1179 976h3v6h-3zM1185 977h3v5h-3zM1191 979h3v3h-3zM1197 976h3v6h-3zM1203 978h3v4h-3zM1215 977h3v5h-3zM1221 977h3v5h-3zM1227 975h3v7h-3zM1239 973h3v9h-3zM1245 970h3v12h-3zM1251 976h3v6h-3zM1257 974h3v8h-3zM1263 971h3v11h-3zM1269 972h3v10h-3zM1275 976h3v6h-3zM1281 975h3v7h-3zM1287 975h3v7h-3zM1293 974h3v8h-3zM1299 978h3v4h-3zM1305 977h3v5h-3zM1311 975h3v7h-3zM1317 971h3v11h-3zM1323 976h3v6h-3zM1329 978h3v4h-3zM1335 975h3v7h-3zM1341 975h3v7h-3zM1347 977h3v5h-3zM1353 979h3v3h-3zM1359 978h3v4h-3zM1365 979h3v3h-3zM1371 978h3v4h-3zM1377 978h3v4h-3zM1389 977h3v5h-3zM1395 979h3v3h-3zM1401 979h3v3h-3zM1407 980h3v2h-3zM1413 979h3v3h-3zM1419 978h3v4h-3zM1425 979h3v3h-3zM1431 979h3v3h-3zM1437 978h3v4h-3zM1443 978h3v4h-3zM1449 978h3v4h-3zM1455 979h3v3h-3zM1461 980h3v2h-3zM1467 978h3v4h-3zM1473 980h3v2h-3zM1479 980h3v2h-3zM1485 977h3v5h-3zM1491 980h3v2h-3zM1503 978h3v4h-3zM1509 978h3v4h-3zM1515 980h3v2h-3zM1527 971h3v11h-3zM1539 914h3v68h-3zM1545 921h3v61h-3zM1551 955h3v27h-3zM1557 951h3v31h-3zM1563 955h3v27h-3zM1575 947h3v35h-3zM1581 941h3v41h-3zM1587 962h3v20h-3zM1593 968h3v14h-3zM1599 962h3v20h-3zM1605 966h3v16h-3zM1611 969h3v13h-3zM1617 970h3v12h-3zM1623 971h3v11h-3zM1629 976h3v6h-3z"/>
</g>
<g shape-rendering="crispEdges">
<path fill="#808080" d="M10 586h1v10h-1zM9 586h3v1h-3zM16 586h1v10h-1zM15 586h3v1h-3zM22 586h1v10h-1zM21 586h3v1h-3zM34 586h1v10h-1zM33 586h3v10h-3zM45 595h3v1h-3zM63 595h3v1h-3zM76 586h1v10h-1zM75 595h3v1h-3zM82 586h1v10h-1zM81 595h3v1h-3zM88 586h1v10h-1zM87 595h3v1h-3zM94 560h1v36h-1zM93 586h3v10h-3zM100 586h1v10h-1zM99 586h3v10h-3zM106 586h1v10h-1zM105 586h3v10h-3zM117 586h3v1h-3zM130 578h1v9h-1zM129 578h3v9h-3zM141 586h3v1h-3zM147 586h3v1h-3zM160 586h1v10h-1zM159 595h3v1h-3zM171 586h3v1h-3zM177 586h3v1h-3zM190 586h1v10h-1zM189 586h3v1h-3zM196 586h1v10h-1zM195 586h3v10h-3zM202 586h1v10h-1zM201 586h3v10h-3zM214 595h1v10h-1zM213 595h3v1h-3zM220 586h1v19h-1zM219 586h3v10h-3zM226 586h1v10h-1zM225 586h3v1h-3zM232 569h1v27h-1zM231 569h3v27h-3zM250 578h1v9h-1zM249 578h3v1h-3zM256 578h1v9h-1zM255 578h3v1h-3zM262 569h1v10h-1zM261 569h3v10h-3zM274 569h1v10h-1zM273 578h3v1h-3zM280 569h1v10h-1zM279 578h3v1h-3zM286 569h1v10h-1zM285 569h3v10h-3zM298 569h1v10h-1zM297 569h3v10h-3zM304 569h1v18h-1zM303 569h3v18h-3zM310 569h1v18h-1zM309 586h3v1h-3zM315 586h3v1h-3zM321 586h3v1h-3zM334 578h1v9h-1zM333 586h3v1h-3zM340 578h1v9h-1zM339 586h3v1h-3zM346 578h1v9h-1zM345 586h3v1h-3zM358 569h1v10h-1zM357 569h3v10h-3zM370 578h1v9h-1zM369 586h3v1h-3zM376 578h1v9h-1zM375 586h3v1h-3zM394 578h1v9h-1zM393 586h3v1h-3zM400 578h1v9h-1zM399 586h3v1h-3zM405 586h3v1h-3zM411 586h3v1h-3zM423 586h3v1h-3zM435 586h3v1h-3zM448 578h1v9h-1zM447 578h3v9h-3zM459 586h3v1h-3zM465 586h3v1h-3zM471 586h3v1h-3zM477 586h3v1h-3zM502 586h1v10h-1zM501 595h3v1h-3zM508 595h1v10h-1zM507 595h3v10h-3zM514 604h1v9h-1zM513 604h3v9h-3zM526 586h1v10h-1zM525 586h3v10h-3zM532 586h1v10h-1zM531 586h3v10h-3zM538 586h1v10h-1zM537 586h3v1h-3zM544 586h1v10h-1zM543 586h3v1h-3zM550 586h1v10h-1zM549 586h3v10h-3zM562 595h1v18h-1zM561 595h3v10h-3zM568 604h1v9h-1zM567 604h3v1h-3zM574 604h1v9h-1zM573 604h3v1h-3zM580 604h1v9h-1zM579 604h3v9h-3zM586 604h1v9h-1zM585 612h3v1h-3zM592 612h1v10h-1zM591 612h3v10h-3zM597 621h3v1h-3zM610 586h1v10h-1zM609 595h3v1h-3zM616 586h1v10h-1zM615 586h3v10h-3zM627 586h3v1h-3zM633 586h3v1h-3zM646 586h1v10h-1zM645 586h3v10h-3zM652 586h1v19h-1zM651 595h3v10h-3zM664 604h1v9h-1zM663 612h3v1h-3zM670 604h1v27h-1zM669 612h3v19h-3zM706 612h1v19h-1zM705 612h3v10h-3zM712 604h1v18h-1zM711 604h3v18h-3zM718 604h1v9h-1zM717 604h3v1h-3zM730 612h1v10h-1zM729 612h3v10h-3zM736 612h1v19h-1zM735 612h3v10h-3zM742 578h1v53h-1zM741 604h3v18h-3zM748 569h1v36h-1zM747 578h3v27h-3zM754 526h1v61h-1zM753 534h3v45h-3zM772 517h1v53h-1zM771 526h3v44h-3zM778 552h1v18h-1zM777 569h3v1h-3zM784 552h1v18h-1zM783 560h3v1h-3zM796 560h1v53h-1zM795 569h3v36h-3zM814 569h1v18h-1zM813 586h3v1h-3zM826 552h1v27h-1zM825 560h3v10h-3zM832 526h1v35h-1zM831 552h3v9h-3zM838 534h1v27h-1zM837 534h3v19h-3zM844 534h1v27h-1zM843 534h3v19h-3zM856 526h1v61h-1zM855 534h3v36h-3zM868 534h1v27h-1zM867 552h3v9h-3zM874 508h1v45h-1zM873 508h3v45h-3zM892 473h1v45h-1zM891 473h3v19h-3zM898 473h1v10h-1zM897 473h3v1h-3zM910 473h1v10h-1zM909 473h3v1h-3zM916 430h1v53h-1zM915 430h3v44h-3zM928 465h1v18h-1zM927 465h3v18h-3zM964 421h1v45h-1zM963 430h3v36h-3zM982 413h1v27h-1zM981 413h3v18h-3zM1000 387h1v18h-1zM999 404h3v1h-3zM1024 404h1v18h-1zM1023 413h3v9h-3zM1042 413h1v18h-1zM1041 421h3v1h-3zM1048 378h1v53h-1zM1047 404h3v18h-3zM1054 387h1v18h-1zM1053 395h3v10h-3zM1060 387h1v44h-1zM1059 395h3v19h-3zM1066 413h1v18h-1zM1065 413h3v18h-3zM1072 421h1v27h-1zM1071 430h3v10h-3zM1084 430h1v18h-1zM1083 430h3v18h-3zM1108 421h1v19h-1zM1107 430h3v10h-3zM1114 439h1v18h-1zM1113 439h3v9h-3zM1126 421h1v19h-1zM1125 430h3v10h-3zM1132 421h1v19h-1zM1131 430h3v1h-3zM1138 387h1v53h-1zM1137 387h3v44h-3zM1144 387h1v18h-1zM1143 387h3v1h-3zM1156 378h1v18h-1zM1155 387h3v9h-3zM1174 387h1v27h-1zM1173 395h3v19h-3zM1186 387h1v27h-1zM1185 387h3v27h-3zM1198 387h1v18h-1zM1197 387h3v9h-3zM1204 378h1v27h-1zM1203 387h3v18h-3zM1210 352h1v36h-1zM1209 361h3v27h-3zM1222 343h1v27h-1zM1221 361h3v9h-3zM1228 335h1v27h-1zM1227 343h3v19h-3zM1240 335h1v27h-1zM1239 343h3v1h-3zM1252 326h1v10h-1zM1251 335h3v1h-3zM1276 308h1v19h-1zM1275 317h3v1h-3zM1294 317h1v27h-1zM1293 326h3v10h-3zM1300 335h1v18h-1zM1299 335h3v18h-3zM1318 369h1v27h-1zM1317 369h3v27h-3zM1342 352h1v18h-1zM1341 369h3v1h-3zM1354 369h1v10h-1zM1353 369h3v10h-3zM1360 369h1v36h-1zM1359 378h3v18h-3zM1366 395h1v10h-1zM1365 395h3v1h-3zM1396 387h1v18h-1zM1395 395h3v1h-3zM1402 387h1v27h-1zM1401 395h3v19h-3zM1408 404h1v18h-1zM1407 413h3v9h-3zM1420 395h1v10h-1zM1419 395h3v1h-3zM1426 378h1v18h-1zM1425 378h3v18h-3zM1432 361h1v18h-1zM1431 369h3v10h-3zM1438 343h1v36h-1zM1437 352h3v18h-3zM1450 343h1v27h-1zM1449 361h3v1h-3zM1456 343h1v27h-1zM1455 343h3v19h-3zM1462 343h1v10h-1zM1461 343h3v1h-3zM1474 335h1v44h-1zM1473 343h3v27h-3zM1480 326h1v18h-1zM1479 326h3v18h-3zM1498 308h1v28h-1zM1497 317h3v19h-3zM1516 317h1v19h-1zM1515 317h3v19h-3zM1540 413h1v166h-1zM1539 447h3v62h-3zM1552 282h1v132h-1zM1551 352h3v62h-3zM1558 343h1v97h-1zM1557 352h3v18h-3zM1576 248h1v88h-1zM1575 282h3v36h-3zM1582 317h1v79h-1zM1581 317h3v36h-3zM1588 335h1v79h-1zM1587 352h3v44h-3zM1594 352h1v62h-1zM1593 361h3v35h-3zM1600 361h1v140h-1zM1599 361h3v122h-3zM1612 395h1v71h-1zM1611 404h3v27h-3zM1618 387h1v70h-1zM1617 387h3v18h-3zM1624 352h1v36h-1zM1623 361h3v27h-3zM1630 352h1v27h-1zM1629 361h3v1h-3z"/>
<path fill="#ff0000" d="M28 586h1v19h-1zM27 595h3v1h-3zM40 586h1v10h-1zM39 586h3v10h-3zM58 586h1v19h-1zM57 595h3v1h-3zM70 586h1v10h-1zM69 595h3v1h-3zM124 578h1v9h-1zM123 586h3v1h-3zM136 578h1v9h-1zM135 578h3v9h-3zM154 586h1v10h-1zM153 586h3v10h-3zM238 569h1v27h-1zM237 569h3v27h-3zM268 569h1v10h-1zM267 569h3v10h-3zM292 552h1v27h-1zM291 569h3v1h-3zM328 569h1v18h-1zM327 586h3v1h-3zM364 569h1v18h-1zM363 569h3v10h-3zM388 578h1v9h-1zM387 578h3v9h-3zM418 578h1v9h-1zM417 586h3v1h-3zM430 578h1v9h-1zM429 586h3v1h-3zM442 578h1v9h-1zM441 586h3v1h-3zM484 586h1v10h-1zM483 586h3v10h-3zM496 578h1v18h-1zM495 586h3v10h-3zM622 578h1v9h-1zM621 586h3v1h-3zM682 612h1v19h-1zM681 612h3v19h-3zM694 604h1v9h-1zM693 612h3v1h-3zM724 595h1v18h-1zM723 604h3v9h-3zM760 500h1v44h-1zM759 517h3v18h-3zM766 508h1v45h-1zM765 517h3v18h-3zM790 543h1v36h-1zM789 560h3v10h-3zM808 569h1v27h-1zM807 586h3v1h-3zM850 526h1v70h-1zM849 552h3v18h-3zM862 517h1v53h-1zM861 534h3v36h-3zM880 500h1v27h-1zM879 508h3v19h-3zM904 439h1v44h-1zM903 473h3v1h-3zM922 430h1v44h-1zM921 430h3v36h-3zM940 465h1v27h-1zM939 473h3v19h-3zM952 473h1v28h-1zM951 491h3v1h-3zM970 421h1v27h-1zM969 430h3v18h-3zM988 378h1v36h-1zM987 387h3v27h-3zM994 387h1v18h-1zM993 387h3v18h-3zM1006 395h1v27h-1zM1005 404h3v18h-3zM1018 404h1v18h-1zM1017 421h3v1h-3zM1030 395h1v27h-1zM1029 413h3v9h-3zM1096 430h1v27h-1zM1095 447h3v1h-3zM1150 378h1v18h-1zM1149 387h3v9h-3zM1162 387h1v9h-1zM1161 387h3v9h-3zM1192 387h1v18h-1zM1191 387h3v9h-3zM1216 352h1v18h-1zM1215 361h3v9h-3zM1246 308h1v36h-1zM1245 335h3v9h-3zM1264 265h1v53h-1zM1263 291h3v27h-3zM1270 291h1v27h-1zM1269 291h3v18h-3zM1288 300h1v27h-1zM1287 317h3v10h-3zM1312 335h1v44h-1zM1311 352h3v18h-3zM1372 387h1v27h-1zM1371 395h3v19h-3zM1444 343h1v27h-1zM1443 352h3v10h-3zM1468 343h1v36h-1zM1467 343h3v27h-3zM1486 308h1v19h-1zM1485 326h3v1h-3zM1492 326h1v18h-1zM1491 326h3v10h-3zM1504 308h1v19h-1zM1503 317h3v1h-3zM1510 308h1v28h-1zM1509 317h3v19h-3zM1522 308h1v62h-1zM1521 317h3v53h-3zM1534 135h1v435h-1zM1533 335h3v122h-3zM1564 326h1v88h-1zM1563 369h3v36h-3z"/>
<path fill="#0000ff" d="M52 595h1v10h-1zM51 595h3v1h-3zM112 586h1v10h-1zM111 586h3v10h-3zM166 586h1v10h-1zM165 586h3v10h-3zM184 586h1v10h-1zM183 586h3v1h-3zM208 586h1v19h-1zM207 586h3v10h-3zM244 578h1v18h-1zM243 578h3v9h-3zM352 578h1v9h-1zM351 578h3v9h-3zM382 578h1v9h-1zM381 578h3v9h-3zM454 586h1v10h-1zM453 586h3v1h-3zM490 586h1v10h-1zM489 586h3v10h-3zM520 595h1v18h-1zM519 595h3v18h-3zM556 595h1v18h-1zM555 595h3v1h-3zM604 604h1v18h-1zM603 604h3v18h-3zM640 586h1v10h-1zM639 586h3v1h-3zM658 595h1v18h-1zM657 604h3v1h-3zM676 612h1v10h-1zM675 612h3v10h-3zM688 612h1v19h-1zM687 612h3v19h-3zM700 612h1v10h-1zM699 612h3v1h-3zM802 578h1v44h-1zM801 586h3v19h-3zM820 543h1v53h-1zM819 569h3v18h-3zM886 491h1v44h-1zM885 491h3v36h-3zM934 473h1v28h-1zM933 473h3v10h-3zM946 482h1v19h-1zM945 491h3v1h-3zM958 456h1v53h-1zM957 465h3v27h-3zM976 430h1v36h-1zM975 430h3v18h-3zM1012 413h1v27h-1zM1011 421h3v1h-3zM1036 413h1v18h-1zM1035 421h3v1h-3zM1078 413h1v35h-1zM1077 430h3v10h-3zM1090 439h1v18h-1zM1089 447h3v1h-3zM1102 421h1v36h-1zM1101 430h3v18h-3zM1120 430h1v18h-1zM1119 439h3v9h-3zM1168 387h1v18h-1zM1167 395h3v1h-3zM1180 404h1v18h-1zM1179 413h3v1h-3zM1234 326h1v44h-1zM1233 343h3v1h-3zM1258 308h1v36h-1zM1257 317h3v19h-3zM1282 308h1v28h-1zM1281 308h3v10h-3zM1306 343h1v19h-1zM1305 352h3v1h-3zM1324 378h1v27h-1zM1323 387h3v9h-3zM1330 378h1v10h-1zM1329 378h3v10h-3zM1336 352h1v36h-1zM1335 369h3v10h-3zM1348 369h1v10h-1zM1347 369h3v1h-3zM1378 395h1v27h-1zM1377 413h3v1h-3zM1384 395h1v36h-1zM1383 413h3v1h-3zM1390 387h1v44h-1zM1389 395h3v19h-3zM1414 395h1v27h-1zM1413 395h3v19h-3zM1528 335h1v61h-1zM1527 335h3v35h-3zM1546 378h1v175h-1zM1545 413h3v96h-3zM1570 230h1v192h-1zM1569 282h3v123h-3zM1606 430h1v105h-1zM1605 430h3v53h-3z"/>
<path fill="#ffffff" d="M34 587h1v8h-1zM94 587h1v8h-1zM112 587h1v8h-1zM130 579h1v7h-1zM166 587h1v8h-1zM220 587h1v8h-1zM232 570h1v25h-1zM244 579h1v7h-1zM262 570h1v8h-1zM286 570h1v8h-1zM352 579h1v7h-1zM358 570h1v8h-1zM382 579h1v7h-1zM490 587h1v8h-1zM520 596h1v16h-1zM526 587h1v8h-1zM532 587h1v8h-1zM604 605h1v16h-1zM616 587h1v8h-1zM676 613h1v8h-1zM688 613h1v17h-1zM712 605h1v16h-1zM742 605h1v16h-1zM748 579h1v25h-1zM754 535h1v43h-1zM760 518h1v16h-1zM802 587h1v17h-1zM820 570h1v16h-1zM826 561h1v8h-1zM832 553h1v7h-1zM838 535h1v17h-1zM856 535h1v34h-1zM868 553h1v7h-1zM874 509h1v43h-1zM886 492h1v34h-1zM892 474h1v17h-1zM916 431h1v42h-1zM934 474h1v8h-1zM958 466h1v25h-1zM964 431h1v34h-1zM976 431h1v16h-1zM982 414h1v16h-1zM988 388h1v25h-1zM1024 414h1v7h-1zM1048 405h1v16h-1zM1054 396h1v8h-1zM1078 431h1v8h-1zM1102 431h1v16h-1zM1120 440h1v7h-1zM1126 431h1v8h-1zM1138 388h1v42h-1zM1156 388h1v7h-1zM1186 388h1v25h-1zM1204 388h1v16h-1zM1210 362h1v25h-1zM1222 362h1v7h-1zM1228 344h1v17h-1zM1246 336h1v7h-1zM1258 318h1v17h-1zM1264 292h1v25h-1zM1282 309h1v8h-1zM1324 388h1v7h-1zM1330 379h1v8h-1zM1336 370h1v8h-1zM1390 396h1v17h-1zM1414 396h1v17h-1zM1426 379h1v16h-1zM1432 370h1v8h-1zM1438 353h1v16h-1zM1456 344h1v17h-1zM1474 344h1v25h-1zM1480 327h1v16h-1zM1498 318h1v17h-1zM1516 318h1v17h-1zM1528 336h1v33h-1zM1546 414h1v94h-1zM1552 353h1v60h-1zM1570 283h1v121h-1zM1594 362h1v33h-1zM1606 431h1v51h-1zM1612 405h1v25h-1zM1618 388h1v16h-1zM1624 362h1v25h-1z"/>
<path fill="#ff0000" d="M105 562h4v4h-4zM111 562h4v4h-4zM117 562h4v4h-4zM123 562h4v4h-4zM129 562h4v4h-4zM135 562h4v4h-4zM141 562h4v4h-4zM147 562h4v4h-4zM153 562h4v4h-4zM159 576h4v4h-4zM165 576h4v4h-4zM171 576h4v4h-4zM177 576h4v4h-4zM183 576h4v4h-4zM189 578h4v4h-4zM195 578h4v4h-4zM201 579h4v4h-4zM207 579h4v4h-4zM213 580h4v4h-4zM219 580h4v4h-4zM225 580h4v4h-4zM453 569h4v4h-4zM459 577h4v4h-4zM465 577h4v4h-4zM471 577h4v4h-4zM477 577h4v4h-4zM483 577h4v4h-4zM489 580h4v4h-4zM507 575h4v4h-4zM513 583h4v4h-4zM519 592h4v4h-4zM555 562h4v4h-4zM561 579h4v4h-4zM567 579h4v4h-4zM573 579h4v4h-4zM579 579h4v4h-4zM585 580h4v4h-4zM591 580h4v4h-4zM597 589h4v4h-4zM603 591h4v4h-4zM657 576h4v4h-4zM663 579h4v4h-4zM669 582h4v4h-4zM675 597h4v4h-4zM681 597h4v4h-4zM687 597h4v4h-4zM693 597h4v4h-4zM699 597h4v4h-4zM705 597h4v4h-4zM711 597h4v4h-4zM717 597h4v4h-4zM801 488h4v4h-4zM807 500h4v4h-4zM813 500h4v4h-4zM819 500h4v4h-4zM825 500h4v4h-4zM831 500h4v4h-4zM837 500h4v4h-4zM843 500h4v4h-4zM849 500h4v4h-4zM855 500h4v4h-4zM861 500h4v4h-4zM867 500h4v4h-4zM873 500h4v4h-4zM1077 370h4v4h-4zM1083 370h4v4h-4zM1089 370h4v4h-4zM1095 377h4v4h-4zM1101 377h4v4h-4zM1107 377h4v4h-4zM1113 377h4v4h-4zM1119 381h4v4h-4zM1125 381h4v4h-4zM1131 381h4v4h-4zM1137 381h4v4h-4zM1143 381h4v4h-4zM1299 258h4v4h-4zM1305 269h4v4h-4zM1311 284h4v4h-4zM1317 291h4v4h-4zM1323 311h4v4h-4zM1329 328h4v4h-4zM1335 328h4v4h-4zM1341 328h4v4h-4zM1347 328h4v4h-4zM1353 328h4v4h-4zM1359 328h4v4h-4zM1365 338h4v4h-4zM1371 341h4v4h-4zM1377 354h4v4h-4zM1383 363h4v4h-4zM1389 370h4v4h-4zM1395 370h4v4h-4zM1401 370h4v4h-4zM1407 370h4v4h-4zM1413 370h4v4h-4zM1419 370h4v4h-4zM1425 370h4v4h-4zM1527 284h4v4h-4zM1539 358h4v4h-4zM1545 358h4v4h-4z"/><path fill="#0000ff" d="M9 617h4v4h-4zM15 617h4v4h-4zM21 616h4v4h-4zM27 616h4v4h-4zM33 616h4v4h-4zM39 616h4v4h-4zM45 613h4v4h-4zM51 613h4v4h-4zM57 613h4v4h-4zM63 608h4v4h-4zM69 608h4v4h-4zM75 606h4v4h-4zM81 606h4v4h-4zM87 606h4v4h-4zM93 603h4v4h-4zM99 584h4v4h-4zM231 613h4v4h-4zM237 603h4v4h-4zM243 603h4v4h-4zM249 603h4v4h-4zM255 603h4v4h-4zM261 603h4v4h-4zM267 603h4v4h-4zM273 603h4v4h-4zM279 603h4v4h-4zM285 603h4v4h-4zM291 603h4v4h-4zM297 586h4v4h-4zM303 586h4v4h-4zM309 586h4v4h-4zM315 586h4v4h-4zM321 586h4v4h-4zM327 586h4v4h-4zM333 586h4v4h-4zM339 586h4v4h-4zM345 586h4v4h-4zM351 586h4v4h-4zM357 586h4v4h-4zM363 586h4v4h-4zM369 586h4v4h-4zM375 586h4v4h-4zM381 586h4v4h-4zM387 586h4v4h-4zM393 586h4v4h-4zM399 586h4v4h-4zM405 586h4v4h-4zM411 586h4v4h-4zM417 586h4v4h-4zM423 586h4v4h-4zM429 586h4v4h-4zM435 586h4v4h-4zM441 586h4v4h-4zM447 586h4v4h-4zM495 597h4v4h-4zM501 594h4v4h-4zM525 616h4v4h-4zM531 610h4v4h-4zM537 610h4v4h-4zM543 610h4v4h-4zM549 610h4v4h-4zM609 633h4v4h-4zM615 618h4v4h-4zM621 615h4v4h-4zM627 604h4v4h-4zM633 604h4v4h-4zM639 604h4v4h-4zM645 604h4v4h-4zM651 604h4v4h-4zM723 646h4v4h-4zM729 640h4v4h-4zM735 640h4v4h-4zM741 640h4v4h-4zM747 627h4v4h-4zM753 623h4v4h-4zM759 594h4v4h-4zM765 578h4v4h-4zM771 578h4v4h-4zM777 578h4v4h-4zM783 578h4v4h-4zM789 578h4v4h-4zM879 634h4v4h-4zM885 617h4v4h-4zM891 613h4v4h-4zM897 597h4v4h-4zM903 591h4v4h-4zM909 561h4v4h-4zM915 561h4v4h-4zM921 531h4v4h-4zM927 528h4v4h-4zM933 528h4v4h-4zM939 528h4v4h-4zM945 528h4v4h-4zM951 528h4v4h-4zM957 528h4v4h-4zM963 528h4v4h-4zM969 506h4v4h-4zM975 506h4v4h-4zM981 506h4v4h-4zM987 491h4v4h-4zM993 461h4v4h-4zM999 461h4v4h-4zM1005 461h4v4h-4zM1011 461h4v4h-4zM1017 461h4v4h-4zM1023 461h4v4h-4zM1029 461h4v4h-4zM1035 457h4v4h-4zM1041 457h4v4h-4zM1047 457h4v4h-4zM1053 436h4v4h-4zM1059 436h4v4h-4zM1065 436h4v4h-4zM1149 455h4v4h-4zM1155 446h4v4h-4zM1161 443h4v4h-4zM1167 443h4v4h-4zM1173 443h4v4h-4zM1179 443h4v4h-4zM1185 443h4v4h-4zM1191 443h4v4h-4zM1197 443h4v4h-4zM1203 437h4v4h-4zM1209 430h4v4h-4zM1215 409h4v4h-4zM1221 408h4v4h-4zM1227 404h4v4h-4zM1233 398h4v4h-4zM1239 394h4v4h-4zM1245 394h4v4h-4zM1251 380h4v4h-4zM1257 380h4v4h-4zM1263 380h4v4h-4zM1269 345h4v4h-4zM1275 345h4v4h-4zM1281 345h4v4h-4zM1287 345h4v4h-4zM1293 345h4v4h-4zM1437 427h4v4h-4zM1443 413h4v4h-4zM1449 410h4v4h-4zM1455 405h4v4h-4zM1461 405h4v4h-4zM1467 402h4v4h-4zM1473 402h4v4h-4zM1479 402h4v4h-4zM1485 396h4v4h-4zM1491 378h4v4h-4zM1497 378h4v4h-4zM1503 375h4v4h-4zM1509 372h4v4h-4zM1515 372h4v4h-4zM1521 372h4v4h-4zM1533 424h4v4h-4zM1551 675h4v4h-4zM1557 612h4v4h-4zM1563 612h4v4h-4zM1569 612h4v4h-4zM1575 612h4v4h-4zM1581 612h4v4h-4zM1587 612h4v4h-4zM1593 612h4v4h-4zM1599 612h4v4h-4zM1605 612h4v4h-4zM1611 612h4v4h-4zM1617 612h4v4h-4zM1623 612h4v4h-4zM1629 608h4v4h-4z"/>
<rect x="1635" y="308" width="3" height="53" fill="#1c2a1c"/><rect x="1636" y="309" width="1" height="51" fill="#a4d8a4"/>
</g>
<path d="M36 578.5h9l-4.500 4.800z" fill="#007800" stroke="#001a00" stroke-width=".8"/>
<polyline fill="none" stroke="#1414ff" stroke-width="0.95" stroke-linejoin="miter" points="1,606 94.5,560.5 112.5,595.5 136.5,578.5 220.5,604.5 292.5,552.5 520.5,612.5 550.5,586.5 604.5,621.5 622.5,578.5 742.5,630.5 760.5,500.5 802.5,621.5 922.5,430.5 958.5,508.5 988.5,378.5 1012.5,439.5 1048.5,378.5 1114.5,456.5 1156.5,378.5 1180.5,421.5 1534.5,135.5 1540.5,578.5 1570.5,230.5 1606.5,534.5 1630.5,352.5"/>
<g shape-rendering="crispEdges" fill="#000">
<rect x="0" y="716" width="1710" height="1" fill="#000"/><rect x="0" y="870" width="1710" height="1" fill="#000"/>
<rect x="1641" y="102" width="1" height="888" fill="#000"/><rect x="1" y="989" width="1641" height="1" fill="#000"/>
<rect x="1642" y="682" width="6" height="1" fill="#000"/>
<rect x="1642" y="638" width="6" height="1" fill="#000"/>
<rect x="1642" y="595" width="6" height="1" fill="#000"/>
<rect x="1642" y="551" width="6" height="1" fill="#000"/>
<rect x="1642" y="508" width="6" height="1" fill="#000"/>
<rect x="1642" y="465" width="6" height="1" fill="#000"/>
<rect x="1642" y="421" width="6" height="1" fill="#000"/>
<rect x="1642" y="378" width="6" height="1" fill="#000"/>
<rect x="1642" y="334" width="6" height="1" fill="#000"/>
<rect x="1642" y="291" width="6" height="1" fill="#000"/>
<rect x="1642" y="248" width="6" height="1" fill="#000"/>
<rect x="1642" y="204" width="6" height="1" fill="#000"/>
<rect x="1642" y="161" width="6" height="1" fill="#000"/>
<rect x="1642" y="117" width="6" height="1" fill="#000"/>
<rect x="1642" y="730" width="6" height="1" fill="#000"/>
<rect x="1642" y="754" width="6" height="1" fill="#000"/>
<rect x="1642" y="778" width="6" height="1" fill="#000"/>
<rect x="1642" y="802" width="6" height="1" fill="#000"/>
<rect x="1642" y="826" width="6" height="1" fill="#000"/>
<rect x="1642" y="851" width="6" height="1" fill="#000"/>
<rect x="1642" y="900" width="6" height="1" fill="#000"/>
<rect x="1642" y="928" width="6" height="1" fill="#000"/>
<rect x="1642" y="955" width="6" height="1" fill="#000"/>
<rect x="1642" y="982" width="6" height="1" fill="#000"/>
<rect x="16" y="990" width="1" height="6" fill="#000"/>
<rect x="88" y="990" width="1" height="6" fill="#000"/>
<rect x="160" y="990" width="1" height="6" fill="#000"/>
<rect x="232" y="990" width="1" height="6" fill="#000"/>
<rect x="304" y="990" width="1" height="6" fill="#000"/>
<rect x="376" y="990" width="1" height="6" fill="#000"/>
<rect x="448" y="990" width="1" height="6" fill="#000"/>
<rect x="520" y="990" width="1" height="6" fill="#000"/>
<rect x="592" y="990" width="1" height="6" fill="#000"/>
<rect x="664" y="990" width="1" height="6" fill="#000"/>
<rect x="736" y="990" width="1" height="6" fill="#000"/>
<rect x="808" y="990" width="1" height="6" fill="#000"/>
<rect x="880" y="990" width="1" height="6" fill="#000"/>
<rect x="952" y="990" width="1" height="6" fill="#000"/>
<rect x="1024" y="990" width="1" height="6" fill="#000"/>
<rect x="1096" y="990" width="1" height="6" fill="#000"/>
<rect x="1168" y="990" width="1" height="6" fill="#000"/>
<rect x="1240" y="990" width="1" height="6" fill="#000"/>
<rect x="1312" y="990" width="1" height="6" fill="#000"/>
<rect x="1384" y="990" width="1" height="6" fill="#000"/>
<rect x="1456" y="990" width="1" height="6" fill="#000"/>
<rect x="1528" y="990" width="1" height="6" fill="#000"/>
<rect x="1600" y="990" width="1" height="6" fill="#000"/>
</g>
<g font-family="Liberation Sans, sans-serif" font-size="11px" fill="#000">
<text x="1648.5" y="686.5">1,3535</text>
<text x="1648.5" y="642.5">1,3540</text>
<text x="1648.5" y="599.5">1,3545</text>
<text x="1648.5" y="555.5">1,3550</text>
<text x="1648.5" y="512.5">1,3555</text>
<text x="1648.5" y="469.5">1,3560</text>
<text x="1648.5" y="425.5">1,3565</text>
<text x="1648.5" y="382.5">1,3570</text>
<text x="1648.5" y="338.5">1,3575</text>
<text x="1648.5" y="295.5">1,3580</text>
<text x="1648.5" y="252.5">1,3585</text>
<text x="1648.5" y="208.5">1,3590</text>
<text x="1648.5" y="165.5">1,3595</text>
<text x="1648.5" y="121.5">1,3600</text>
<text x="1648.5" y="734.5">0,001</text>
<text x="1648.5" y="758.5">0,0005</text>
<text x="1648.5" y="782.5">0</text>
<text x="1648.5" y="806.5">-0,0005</text>
<text x="1648.5" y="830.5">-0,001</text>
<text x="1648.5" y="855.5">-0,0015</text>
<text x="1648.5" y="904.5">600M</text>
<text x="1648.5" y="932.5">400M</text>
<text x="1648.5" y="959.5">200M</text>
<text x="1648.5" y="986.5">0</text>
<text x="15.5" y="1006" text-anchor="middle">01:00</text>
<text x="87.5" y="1006" text-anchor="middle">02:00</text>
<text x="159.5" y="1006" text-anchor="middle">03:00</text>
<text x="231.5" y="1006" text-anchor="middle">04:00</text>
<text x="303.5" y="1006" text-anchor="middle">05:00</text>
<text x="375.5" y="1006" text-anchor="middle">06:00</text>
<text x="447.5" y="1006" text-anchor="middle">07:00</text>
<text x="519.5" y="1006" text-anchor="middle">08:00</text>
<text x="591.5" y="1006" text-anchor="middle">09:00</text>
<text x="663.5" y="1006" text-anchor="middle">10:00</text>
<text x="735.5" y="1006" text-anchor="middle">11:00</text>
<text x="807.5" y="1006" text-anchor="middle">12:00</text>
<text x="879.5" y="1006" text-anchor="middle">13:00</text>
<text x="951.5" y="1006" text-anchor="middle">14:00</text>
<text x="1023.5" y="1006" text-anchor="middle">15:00</text>
<text x="1095.5" y="1006" text-anchor="middle">16:00</text>
<text x="1167.5" y="1006" text-anchor="middle">17:00</text>
<text x="1239.5" y="1006" text-anchor="middle">18:00</text>
<text x="1311.5" y="1006" text-anchor="middle">19:00</text>
<text x="1383.5" y="1006" text-anchor="middle">20:00</text>
<text x="1455.5" y="1006" text-anchor="middle">21:00</text>
<text x="1527.5" y="1006" text-anchor="middle">22:00</text>
<text x="1599.5" y="1006" text-anchor="middle">23:00</text>
<text x="2" y="113">MTP Analysis, MTP ATRStop</text>
<text x="2" y="738">MTP STF</text>
<text x="2" y="891">MTP VSA</text>
<text x="3" y="987">© 2014 NinjaTrader, LLC</text>
</g>
<path d="M1642.0 308L1648.5 301.0H1684.5V315.0H1648.5Z" fill="#000"/><text x="1649.5" y="312" font-family="Liberation Sans, sans-serif" font-size="11px" fill="#fff">1,3578</text>
<path d="M1642.0 610L1648.5 603.0H1684.5V617.0H1648.5Z" fill="#0000ff"/><text x="1649.5" y="614" font-family="Liberation Sans, sans-serif" font-size="11px" fill="#fff">1,3543</text>
<path d="M1642.0 745L1648.5 738.5H1696.0V751.5H1648.5Z" fill="#a9a9a9" stroke="#000" stroke-width="1"/><text x="1649.5" y="749" font-family="Liberation Sans, sans-serif" font-size="11px" fill="#000">0,000687</text>
<path d="M1642.0 790.5L1648.5 784.0H1700.0V797.0H1648.5Z" fill="#0000ff" stroke="#000" stroke-width="1"/><text x="1649.5" y="794.5" font-family="Liberation Sans, sans-serif" font-size="11px" fill="#fff">-0,000255</text>
<path d="M1642.0 798.5L1648.5 792.0H1700.0V805.0H1648.5Z" fill="#a9a9a9" stroke="#000" stroke-width="1"/><text x="1649.5" y="802.5" font-family="Liberation Sans, sans-serif" font-size="11px" fill="#000">-0,000415</text>
<path d="M1642.0 976L1648.5 969.0H1672.0V983.0H1648.5Z" fill="#0000ff"/><text x="1649.5" y="980" font-family="Liberation Sans, sans-serif" font-size="11px" fill="#fff">38M</text>
</svg>
<div class="a wm" style="left:25px;top:133px;font-size:27px;line-height:30px;transform:scaleX(.812);">WWW.TRADING-SOFTWARE-COLLECTION.COM</div>
<div class="a wm" style="left:25px;top:163.5px;font-size:16.5px;line-height:18px;transform:scaleX(1.175);">ANDREYBBRV@GMAIL.COM</div>
<div class="a wm" style="left:320px;top:163.5px;font-size:16.5px;line-height:18px;transform:scaleX(1.244);">SKYPE: ANDREYBBRV</div>
<!-- ===== right panel ===== -->
<div class="a" style="left:1710px;top:22px;width:210px;height:1018px;background:#c0cfdf;border-left:1px solid #5c6570;border-top:1px solid #6a6a6a;box-sizing:border-box;"></div>
<div class="a" style="left:1711px;top:23px;width:1px;height:1017px;background:#d3deea;"></div>
<div class="a" style="left:1713px;top:26px;width:205px;height:48px;box-sizing:border-box;border:1px solid;border-color:#7a8694 #fff #fff #7a8694;background:linear-gradient(90deg,#2a24c4 0,#2e28c8 60%,#2a2498 100%);"></div>
<div class="a" style="left:1722px;top:26.5px;width:170px;height:36px;transform-origin:0 0;transform:scaleX(1.125);font-family:'Liberation Sans',sans-serif;font-size:31px;line-height:36px;color:#fff;letter-spacing:-0.3px"><b>MTP</b>redictor</div>
<div class="a" style="left:1722px;top:60px;width:195px;font-family:'Liberation Sans',sans-serif;font-weight:bold;font-size:6.8px;line-height:10px;color:#d4d6fa;letter-spacing:2.1px;">PROFESSIONAL TRADING SOFTWARE</div>
<div class="gb" style="left:1716px;top:88px;width:195px;height:31px;"></div>
<div class="gl" style="left:1723px;top:81px;">Position Sizing/Risk Management</div>
<div class="fld" style="left:1722px;top:97px;width:140px;height:19px;line-height:17px;">DefaultAccount</div>
<div class="a c" style="left:1864px;top:97px;width:41px;height:19px;line-height:18px;background:#00008b;color:#fff;">MTP</div>
<div class="gb" style="left:1716px;top:133px;width:195px;height:273px;"></div>
<div class="gl" style="left:1722px;top:126px;letter-spacing:0.12px;">Trade Setup</div>
<div class="fld" style="left:1723px;top:142px;width:184px;height:17px;line-height:15px;">No Trade</div>
<div class="gb" style="left:1723px;top:167px;width:182px;height:28px;"></div>
<div class="gl" style="left:1729px;top:160px;">Direction</div>
<div class="fld" style="left:1728px;top:176px;width:171px;height:15px;line-height:13px;">-</div>
<div class="gb" style="left:1723px;top:206px;width:182px;height:43px;"></div>
<div class="gl" style="left:1729px;top:199px;">Entry/Stop/Target</div>
<div class="fld" style="left:1728px;top:215px;width:55px;height:16px;line-height:14px;">0</div>
<div class="fld" style="left:1786px;top:215px;width:55px;height:16px;line-height:14px;">0</div>
<div class="fld" style="left:1844px;top:215px;width:55px;height:16px;line-height:14px;">0</div>
<div class="t c" style="left:1695.0px;top:232px;width:120px;">Entry</div>
<div class="t c" style="left:1750.0px;top:232px;width:120px;">Stop</div>
<div class="t c" style="left:1806.0px;top:232px;width:120px;">Target</div>
<div class="gb" style="left:1723px;top:260px;width:182px;height:49px;"></div>
<div class="gl" style="left:1729px;top:253px;">Risk/Reward</div>
<div class="t c" style="left:1693.0px;top:270px;width:120px;">Risk</div>
<div class="t c" style="left:1754.0px;top:270px;width:120px;">Reward</div>
<div class="t c" style="left:1812.0px;top:270px;width:120px;">R/R</div>
<div class="fld" style="left:1729px;top:286px;width:57px;height:15px;line-height:13px;">0</div>
<div class="fld" style="left:1789px;top:286px;width:57px;height:15px;line-height:13px;">0</div>
<div class="fld" style="left:1849px;top:286px;width:51px;height:15px;line-height:13px;">0</div>
<div class="gb" style="left:1723px;top:319px;width:182px;height:53px;"></div>
<div class="gl" style="left:1730px;top:312px;letter-spacing:0.17px;">Position Size</div>
<div class="spin" style="left:1736px;top:329px;width:76px;height:22px;"></div>
<div class="t " style="left:1762px;top:333.0px;color:#7a7a7a;">0</div>
<div class="a" style="left:1797px;top:331px;width:13px;height:9.0px;box-sizing:border-box;border:1px solid #c8ccd2;border-radius:2px;background:linear-gradient(#fdfdfd,#e4e6ea);"></div>
<div class="a" style="left:1800.5px;top:333.5px;width:0;height:0;border-left:3px solid transparent;border-right:3px solid transparent;border-bottom:4px solid #9aa0a8;"></div>
<div class="a" style="left:1797px;top:340.0px;width:13px;height:9.0px;box-sizing:border-box;border:1px solid #c8ccd2;border-radius:2px;background:linear-gradient(#fdfdfd,#e4e6ea);"></div>
<div class="a" style="left:1800.5px;top:342.5px;width:0;height:0;border-left:3px solid transparent;border-right:3px solid transparent;border-top:4px solid #9aa0a8;"></div>
<div class="t " style="left:1817px;top:333px;letter-spacing:-0.06px;">currency</div>
<div class="a" style="left:1736px;top:357px;width:11px;height:11px;box-sizing:border-box;border:1px solid #3f5068;background:#c0cfdf;"></div>
<div class="t " style="left:1752px;top:355px;color:#33465c;letter-spacing:0.13px;">Override position size</div>
<div class="btn" style="left:1723px;top:379px;width:57px;height:23px;line-height:21px;">TRADE</div>
<div class="btn" style="left:1787px;top:379px;width:58px;height:23px;line-height:21px;">CANCEL</div>
<div class="btn" style="left:1850px;top:379px;width:57px;height:23px;line-height:21px;">SYNC</div>
<div class="gb" style="left:1716px;top:416px;width:195px;height:68px;"></div>
<div class="gl" style="left:1722px;top:409px;letter-spacing:0.07px;">Entry Order Type</div>
<div class="btn" style="left:1724px;top:427px;width:91px;height:22px;line-height:20px;background:#4169e1;color:#fff;font-weight:bold;border-color:#5a5a5a;">MANUAL</div>
<div class="btn" style="left:1814px;top:427px;width:90px;height:22px;line-height:20px;color:#000;font-weight:bold;border-color:#5a5a5a;background:#f6f6f6;">AUTO</div>
<div class="btn" style="left:1724px;top:456px;width:42px;height:22px;line-height:20px;color:#000;border-color:#5a5a5a;background:#f6f6f6;">MKT</div>
<div class="btn" style="left:1765px;top:456px;width:42px;height:22px;line-height:20px;color:#000;border-color:#5a5a5a;background:#f6f6f6;">LMT</div>
<div class="btn" style="left:1806px;top:456px;width:42px;height:22px;line-height:20px;background:#4169e1;color:#fff;border-color:#5a5a5a;">STP</div>
<div class="btn" style="left:1847px;top:456px;width:57px;height:22px;line-height:20px;color:#000;border-color:#5a5a5a;background:#f6f6f6;">STPLMT</div>
<div class="gb" style="left:1716px;top:493px;width:195px;height:56px;"></div>
<div class="gl" style="left:1722px;top:486px;letter-spacing:0.10px;">Bracket Orders</div>
<div class="t " style="left:1726px;top:507px;letter-spacing:0.04px;">Time In Force:</div>
<div class="a" style="left:1827px;top:504px;width:75px;height:19px;border-radius:3px;box-sizing:border-box;border:1px solid #b8bcc2;background:#f0f0f0;box-shadow:inset 0 0 0 1px #fafafa;"></div>
<div class="t " style="left:1832px;top:506.5px;color:#8a8a8a;">Gtc</div>
<div class="a" style="left:1890px;top:511.5px;width:0;height:0;border-left:3.5px solid transparent;border-right:3.5px solid transparent;border-top:4px solid #8a8a8a;"></div>
<div class="a" style="left:1727px;top:530px;width:12px;height:12px;box-sizing:border-box;border:1px solid #8e8f8f;background:linear-gradient(135deg,#dfe3e8,#f8f8f8);box-shadow:inset 0 0 0 1px #f4f4f4;"></div>
<svg class="a" style="left:1727px;top:530px" width="12" height="12" viewBox="0 0 12 12"><path d="M2.8 5.6 L5 8.6 L9.2 2.6" fill="none" stroke="#3a4fc0" stroke-width="1.8"/></svg>
<div class="t " style="left:1745px;top:529px;letter-spacing:0.17px;">One Cancels Other (OCO)</div>
<div class="gb" style="left:1716px;top:560px;width:195px;height:76px;"></div>
<div class="gl" style="left:1722px;top:553px;">Position Status</div>
<div class="t c" style="left:1689.0px;top:569px;width:120px;">Qty</div>
<div class="t c" style="left:1754.0px;top:570px;width:120px;">PnL</div>
<div class="t c" style="left:1819.0px;top:570px;width:120px;">Avg Price</div>
<div class="a c" style="left:1721px;top:587px;width:188px;height:17px;box-sizing:border-box;border:1px solid #8a8a8a;background:#faf0e6;"></div>
<div class="a c" style="left:1775px;top:587px;width:80px;height:17px;background:#000;"></div>
<div class="t c" style="left:1688.0px;top:588.5px;width:120px;font-weight:bold;">FLAT</div>
<div class="t c" style="left:1754.0px;top:588.5px;width:120px;font-weight:bold;color:#fff;">PnL</div>
<div class="t c" style="left:1821.0px;top:588.5px;width:120px;font-weight:bold;">0</div>
<div class="btn" style="left:1721px;top:609px;width:50px;height:22px;line-height:20px;">CLOSE</div>
<div class="btn" style="left:1772px;top:609px;width:45px;height:22px;line-height:20px;">B/E</div>
<div class="btn" style="left:1819px;top:609px;width:44px;height:22px;line-height:20px;">ATR</div>
<div class="btn" style="left:1865px;top:609px;width:44px;height:22px;line-height:20px;">BAR</div>
<div class="gb" style="left:1716px;top:645px;width:195px;height:60px;"></div>
<div class="gl" style="left:1721px;top:638px;">Instrument</div>
<div class="t " style="left:1726px;top:655px;">Ask:</div>
<div class="t " style="left:1785px;top:654px;color:#0000ff;">1,358</div>
<div class="t c" style="left:1813.0px;top:653px;width:120px;font-weight:bold;">EURUSD</div>
<div class="t " style="left:1726px;top:672px;">Bid:</div>
<div class="t " style="left:1785px;top:670px;color:#ff0000;">1,3578</div>
<div class="t c" style="left:1816.0px;top:671px;width:120px;">Currency</div>
<div class="t " style="left:1726px;top:687px;">Spread:</div>
<div class="t " style="left:1786px;top:686px;">2</div>
<div class="gb" style="left:1716px;top:714px;width:195px;height:55px;"></div>
<div class="gl" style="left:1722px;top:707px;">Trading Account</div>
<div class="a" style="left:1728px;top:727px;width:117px;height:20px;border-radius:3px;box-sizing:border-box;border:1px solid #707070;background:linear-gradient(#f2f2f2 0,#ebebeb 50%,#dddddd 50%,#cfcfcf 100%);box-shadow:inset 0 0 0 1px #fcfcfc;"></div>
<div class="t " style="left:1733px;top:730.0px;color:#000;">Sim101</div>
<div class="a" style="left:1833px;top:735.0px;width:0;height:0;border-left:3.5px solid transparent;border-right:3.5px solid transparent;border-top:4px solid #000;"></div>
<div class="a" style="left:1851px;top:731px;width:12px;height:12px;box-sizing:border-box;border:1px solid #8e8f8f;background:linear-gradient(135deg,#dfe3e8,#f8f8f8);box-shadow:inset 0 0 0 1px #f4f4f4;"></div>
<svg class="a" style="left:1851px;top:731px" width="12" height="12" viewBox="0 0 12 12"><path d="M2.8 5.6 L5 8.6 L9.2 2.6" fill="none" stroke="#3a4fc0" stroke-width="1.8"/></svg>
<div class="t " style="left:1868px;top:730px;letter-spacing:-0.23px;">Privacy</div>
<div class="t " style="left:1728px;top:751px;letter-spacing:0.02px;">Cash Balance:</div>
<div class="t " style="left:1810px;top:752px;font-size:10px;letter-spacing:-0.4px;">*********</div>
<div class="t " style="left:1876px;top:751px;">USD</div>
<div class="gb" style="left:1716px;top:780px;width:195px;height:152px;"></div>
<div class="gl" style="left:1722px;top:773px;">Auto Trade Management</div>
<div class="gb" style="left:1723px;top:798px;width:182px;height:54px;"></div>
<div class="gl" style="left:1728px;top:791px;letter-spacing:0.15px;">Auto Breakeven</div>
<div class="t " style="left:1730px;top:809px;">Offset:</div>
<div class="t " style="left:1776px;top:810px;">+</div>
<div class="spin" style="left:1787px;top:807px;width:38px;height:21px;"></div>
<div class="t " style="left:1795px;top:810.5px;color:#000;">0</div>
<div class="a" style="left:1810px;top:809px;width:13px;height:8.5px;box-sizing:border-box;border:1px solid #c8ccd2;border-radius:2px;background:linear-gradient(#fdfdfd,#e4e6ea);"></div>
<div class="a" style="left:1813.5px;top:811.25px;width:0;height:0;border-left:3px solid transparent;border-right:3px solid transparent;border-bottom:4px solid #4a6ab8;"></div>
<div class="a" style="left:1810px;top:817.5px;width:13px;height:8.5px;box-sizing:border-box;border:1px solid #c8ccd2;border-radius:2px;background:linear-gradient(#fdfdfd,#e4e6ea);"></div>
<div class="a" style="left:1813.5px;top:819.75px;width:0;height:0;border-left:3px solid transparent;border-right:3px solid transparent;border-top:4px solid #4a6ab8;"></div>
<div class="t " style="left:1828px;top:809px;">pips</div>
<div class="btn" style="left:1864px;top:806px;width:38px;height:25px;line-height:23px;color:#000;background:#f6f6f6;">OFF</div>
<div class="t " style="left:1729px;top:832px;">Trigger:</div>
<div class="spin" style="left:1783px;top:830px;width:42px;height:21px;"></div>
<div class="t " style="left:1787px;top:833.5px;color:#000;">100</div>
<div class="a" style="left:1810px;top:832px;width:13px;height:8.5px;box-sizing:border-box;border:1px solid #c8ccd2;border-radius:2px;background:linear-gradient(#fdfdfd,#e4e6ea);"></div>
<div class="a" style="left:1813.5px;top:834.25px;width:0;height:0;border-left:3px solid transparent;border-right:3px solid transparent;border-bottom:4px solid #4a6ab8;"></div>
<div class="a" style="left:1810px;top:840.5px;width:13px;height:8.5px;box-sizing:border-box;border:1px solid #c8ccd2;border-radius:2px;background:linear-gradient(#fdfdfd,#e4e6ea);"></div>
<div class="a" style="left:1813.5px;top:842.75px;width:0;height:0;border-left:3px solid transparent;border-right:3px solid transparent;border-top:4px solid #4a6ab8;"></div>
<div class="t " style="left:1828px;top:833px;">% risk</div>
<div class="gb" style="left:1723px;top:863px;width:182px;height:61px;"></div>
<div class="gl" style="left:1727px;top:856px;">Auto ATR Trailing Stop</div>
<div class="t " style="left:1728px;top:877px;">Offset:</div>
<div class="t " style="left:1776px;top:877px;">-</div>
<div class="spin" style="left:1785px;top:875px;width:38px;height:21px;"></div>
<div class="t " style="left:1793px;top:878.5px;color:#000;">1</div>
<div class="a" style="left:1808px;top:877px;width:13px;height:8.5px;box-sizing:border-box;border:1px solid #c8ccd2;border-radius:2px;background:linear-gradient(#fdfdfd,#e4e6ea);"></div>
<div class="a" style="left:1811.5px;top:879.25px;width:0;height:0;border-left:3px solid transparent;border-right:3px solid transparent;border-bottom:4px solid #4a6ab8;"></div>
<div class="a" style="left:1808px;top:885.5px;width:13px;height:8.5px;box-sizing:border-box;border:1px solid #c8ccd2;border-radius:2px;background:linear-gradient(#fdfdfd,#e4e6ea);"></div>
<div class="a" style="left:1811.5px;top:887.75px;width:0;height:0;border-left:3px solid transparent;border-right:3px solid transparent;border-top:4px solid #4a6ab8;"></div>
<div class="t " style="left:1826px;top:877px;">pips</div>
<div class="btn" style="left:1864px;top:874px;width:38px;height:25px;line-height:23px;color:#000;background:#f6f6f6;">OFF</div>
<div class="t " style="left:1728px;top:903px;">Trigger:</div>
<div class="a" style="left:1777px;top:900px;width:67px;height:20px;border-radius:3px;box-sizing:border-box;border:1px solid #b8bcc2;background:#f0f0f0;box-shadow:inset 0 0 0 1px #fafafa;"></div>
<div class="t " style="left:1782px;top:903.0px;color:#8a8a8a;">STF</div>
<div class="a" style="left:1832px;top:908.0px;width:0;height:0;border-left:3.5px solid transparent;border-right:3.5px solid transparent;border-top:4px solid #8a8a8a;"></div>
<div class="gb" style="left:1716px;top:942px;width:195px;height:34px;"></div>
<div class="gl" style="left:1722px;top:935px;">Forex</div>
<div class="t " style="left:1724px;top:953px;">Trade Forex in:</div>
<div class="a" style="left:1811px;top:950px;width:91px;height:20px;border-radius:3px;box-sizing:border-box;border:1px solid #707070;background:linear-gradient(#f2f2f2 0,#ebebeb 50%,#dddddd 50%,#cfcfcf 100%);box-shadow:inset 0 0 0 1px #fcfcfc;"></div>
<div class="t " style="left:1816px;top:953.0px;color:#000;">Currency</div>
<div class="a" style="left:1890px;top:958.0px;width:0;height:0;border-left:3.5px solid transparent;border-right:3.5px solid transparent;border-top:4px solid #000;"></div>
<div class="t " style="left:1712px;top:997px;color:#0000ee;text-decoration:underline;letter-spacing:0.05px;">© 2014 MTPredictor Ltd.</div>
<div class="a" style="left:1711px;top:1015px;width:208px;height:24px;background:#efefef;border:1px solid;border-color:#808080 #fff #fff #808080;box-shadow:inset 0 0 0 1px #fff;box-sizing:border-box;"></div>
<div class="a" style="left:1919px;top:22px;width:1px;height:1018px;background:#5f6670;"></div>
<div class="a" style="left:1709px;top:1039px;width:211px;height:1px;background:#5f6670;"></div>
<div class="a c" style="left:1714px;top:1017px;width:24px;height:20px;line-height:20px;background:#32cd32;">C</div>
<div class="a c" style="left:1742px;top:1017px;width:30px;height:20px;line-height:20px;background:#32cd32;">RT</div>
<div class="a c" style="left:1776px;top:1017px;width:127px;height:20px;line-height:20px;background:#ffd700;font-size:11px;">Sim101 - Sim</div>
<!-- ===== horizontal scrollbar ===== -->
<div class="a" style="left:0;top:1017px;width:1710px;height:23px;background:linear-gradient(#f4f4f4,#ececec 30%,#ededed);"></div>
<div class="a" style="left:5px;top:1023px;width:0;height:0;border-top:4px solid transparent;border-bottom:4px solid transparent;border-right:5px solid #222;"></div>
<div class="a" style="left:1700px;top:1023px;width:0;height:0;border-top:4px solid transparent;border-bottom:4px solid transparent;border-left:5px solid #222;"></div>
<div class="a" style="left:1569px;top:1017px;width:123px;height:22px;box-sizing:border-box;border:1px solid #8e8e8e;border-radius:3px;background:linear-gradient(#f3f3f3 0,#e9e9e9 30%,#d8d8d8 32%,#d6d6d6 85%,#c9c9c9 100%);box-shadow:inset 0 0 0 1px rgba(255,255,255,.6);"></div>
<div class="a" style="left:1626px;top:1024px;width:8px;height:7px;background:repeating-linear-gradient(90deg,#3a3a3a 0,#3a3a3a 1px,#f4f4f4 1px,#f4f4f4 2px,transparent 2px,transparent 3px);"></div>

<!-- ===== taskbar ===== -->
<div class="a" style="left:0;top:1040px;width:1920px;height:40px;background:linear-gradient(90deg,#8097b6 0,#8097b6 52px,#a9bfdc 60px,#a9bfdc 1625px,#8096b0 1672px,#8096b0 100%);"></div>
<div class="a" style="left:0;top:1040px;width:1920px;height:1px;background:#39424e;"></div>
<div class="a" style="left:0;top:1041px;width:1920px;height:1px;background:rgba(255,255,255,.35);"></div>
<!-- start orb -->
<div class="a" style="left:9px;top:1042px;width:36px;height:36px;border-radius:18px;background:radial-gradient(circle at 50% 30%,#6fb4ea 0,#2a78c8 45%,#0e3f8c 75%,#0a2a60 100%);box-shadow:0 0 0 1px #1a3a6a, inset 0 0 3px 1px rgba(190,230,255,.8);"></div>
<svg class="a" style="left:15px;top:1048px" width="24" height="24" viewBox="0 0 24 24"><path d="M3 5 Q7 3 11 5.500 L10 12 Q6 10 2 11.500Z" fill="#f0582a"/><path d="M12.500 5.800 Q17 8 21.500 5.500 L20.500 12 Q16 14 11.500 12Z" fill="#7cc242"/><path d="M1.800 12.800 Q6 11.200 9.800 13.500 L8.800 20 Q5 17.800 .8 19.500Z" fill="#2a9ae0"/><path d="M11.200 13.500 Q15.500 15.500 20.200 13.200 L19.200 19.800 Q14.800 22 10.200 19.800Z" fill="#fdb813"/></svg>
<!-- task buttons -->
<div class="a tkb" style="left:59px;top:1041px;width:59px;height:39px;"></div>
<div class="a tkb" style="left:307px;top:1041px;width:59px;height:39px;"></div>
<div class="a tkb" style="left:369px;top:1041px;width:59px;height:39px;"></div>
<div class="a tkb" style="left:431px;top:1041px;width:59px;height:39px;"></div>
<div class="a tkb" style="left:498px;top:1041px;width:54px;height:39px;"></div>
<div class="a tkb" style="left:493px;top:1041px;width:54px;height:39px;background:linear-gradient(135deg,#dfe8f4 0,#c9d8ea 50%,#b9cce4 100%);"></div>
<div class="a tkb" style="left:555px;top:1041px;width:59px;height:39px;"></div>
<!-- explorer icon -->
<svg class="a" style="left:72px;top:1045px" width="34" height="31" viewBox="0 0 34 31"><path d="M2 4 h10 l2 2 h6 v20 h-18z" fill="#f2d87e" stroke="#c9a84a" stroke-width=".8"/><path d="M14 7 h10 l2 2 h6 v18 h-18z" fill="#f6e08e" stroke="#c9a84a" stroke-width=".8"/><rect x="4" y="2" width="3" height="2" fill="#2aa82a"/><rect x="11" y="4" width="3" height="2" fill="#d83a2a"/><rect x="20" y="6" width="3" height="2" fill="#2a7ae0"/><path d="M2 12 h30 v14 h-30z" fill="#f8e6a0" stroke="#c9a84a" stroke-width=".8"/><path d="M5 28 v-8 q0-2 2-2 h18 q2 0 2 2 v8 h-5 v-5 h-12 v5z" fill="#8fd0f4" stroke="#3a8ad0" stroke-width="1"/></svg>
<!-- search doc icon -->
<svg class="a" style="left:135px;top:1044px" width="30" height="33" viewBox="0 0 30 33"><path d="M6 1 h14 l6 6 v23 h-20z" fill="#fbfbfb" stroke="#b4b4b4"/><path d="M20 1 v6 h6" fill="#e4e4e4" stroke="#b4b4b4"/><circle cx="15" cy="14" r="7" fill="none" stroke="#f08a10" stroke-width="3.400"/><path d="M10 19.500 L3 27" stroke="#e87a08" stroke-width="3.600" stroke-linecap="round"/></svg>
<!-- chrome icon -->
<svg class="a" style="left:198px;top:1045px" width="30" height="30" viewBox="0 0 30 30"><circle cx="15" cy="15" r="14" fill="#dd4b39"/><path d="M15 15 L2.900 8 A14 14 0 0 0 13 28.850 Z" fill="#3aa757"/><path d="M15 15 L13 28.850 A14 14 0 0 0 27.100 8 Z" fill="#fbc116"/><path d="M15 15 L27.100 8 A14 14 0 0 0 2.900 8 Z" fill="#dd4b39"/><circle cx="15" cy="15" r="6.400" fill="#f4f4f4"/><circle cx="15" cy="15" r="5" fill="#4a8af4"/></svg>
<!-- notepad pencil -->
<svg class="a" style="left:259px;top:1043px" width="33" height="34" viewBox="0 0 33 34"><path d="M3 3 l18 -2 l6 28 l-20 3z" fill="#ececec" stroke="#b0b0b0"/><path d="M6 7l12-1.500M6.500 10l12-1.500M7 13l12-1.500M7.500 16l10-1.200M8 19l8-1M8.500 22l6-.8" stroke="#8a8a8a" stroke-width="1"/><path d="M11 21 L27 2 L30 4.500 L14 23.500 Z" fill="#f0a030" stroke="#a86a10" stroke-width=".7"/><path d="M27 2 l1.500-1.500 l3 2.500 l-1.500 1.500z" fill="#e0484a"/><path d="M11 21 L9.500 25.500 L14 23.500Z" fill="#e8d4b0" stroke="#6a5a3a" stroke-width=".5"/></svg>
<!-- floppy -->
<svg class="a" style="left:321px;top:1044px" width="32" height="32" viewBox="0 0 32 32"><path d="M1 2 h27 l3 3 v26 h-30z" fill="#1a3ed0" stroke="#0a2080"/><rect x="9" y="2" width="13" height="9" fill="#d8d8d8"/><rect x="17" y="3.500" width="3.500" height="6" fill="#1a3ed0"/><rect x="5" y="15" width="23" height="16" fill="#fafafa"/><path d="M7 18.500h19M7 22.500h19M7 26.500h10" stroke="#e03a3a" stroke-width="1.200"/><text x="17.500" y="29" font-family="Liberation Mono,monospace" font-size="7" font-weight="bold" fill="#333">64</text></svg>
<!-- notepad++ -->
<svg class="a" style="left:383px;top:1043px" width="32" height="34" viewBox="0 0 32 34"><path d="M2 2 h18 l5 5 v25 h-23z" fill="#fbfbfb" stroke="#8a8a8a"/><path d="M3 5h16M3 7.500h18M3 10h20" stroke="#c4cce0" stroke-width=".8"/><path d="M3 14 h21 v17 h-21z" fill="#6ac828"/><path d="M3 14 h21 v8 h-21z" fill="#f4f4f4" opacity=".85"/><text x="5" y="22" font-family="Liberation Sans,sans-serif" font-size="9" font-weight="bold" fill="#222">n++</text><path d="M19 26 L28 3 L31 4.500 L22 27.500Z" fill="#f0b020" stroke="#9a6a10" stroke-width=".6"/><path d="M28 3 l.8-2 l3 1.500 l-.8 2z" fill="#e0484a"/><path d="M19 26 l-.3 3.500 l3.300-2z" fill="#e8d4b0" stroke="#5a4a2a" stroke-width=".4"/></svg>
<!-- NinjaTrader logos -->
<svg class="a" style="left:446px;top:1047px" width="30" height="26" viewBox="0 0 30 26"><path d="M2 18 Q1 6 12 3 L16 14 L13 13 L12 9 Q7 12 8 22 Z" fill="#9a8678"/><path d="M11 22 l4-1 l-1-7 l4 0 l-3 9z" fill="#a89484"/><path d="M14 4 L20 17 Q25 12 21 4 Q29 8 28 16 Q26 24 17 24 Z" fill="#c8202a"/><path d="M18 2 l6 1 l-3 4z" fill="#c8202a"/></svg>
<svg class="a" style="left:505px;top:1047px" width="30" height="26" viewBox="0 0 30 26"><path d="M2 18 Q1 6 12 3 L16 14 L13 13 L12 9 Q7 12 8 22 Z" fill="#9a8678"/><path d="M11 22 l4-1 l-1-7 l4 0 l-3 9z" fill="#a89484"/><path d="M14 4 L20 17 Q25 12 21 4 Q29 8 28 16 Q26 24 17 24 Z" fill="#c8202a"/><path d="M18 2 l6 1 l-3 4z" fill="#c8202a"/></svg>
<!-- MTP icon -->
<svg class="a" style="left:570px;top:1045px" width="30" height="31" viewBox="0 0 30 31"><rect x=".5" y=".5" width="29" height="30" rx="5" fill="#3a8ad4" stroke="#1a5aa0"/><rect x="1.500" y="1.500" width="27" height="13" rx="4" fill="#6ab0ea" opacity=".6"/><text x="15" y="10" font-family="Liberation Sans,sans-serif" font-size="8.500" font-weight="bold" fill="#fff" text-anchor="middle">MTP</text><path d="M2 17 l3-2 l2 2 l3-4 l2 3 l3 3 l3-7 l2 5 l5-13" fill="none" stroke="#e8f4ff" stroke-width="1"/><text x="15" y="26" font-family="Liberation Sans,sans-serif" font-size="8.500" font-weight="bold" fill="#fff" text-anchor="middle">v7</text></svg>
<!-- tray -->
<div class="t" style="left:1682px;top:1050px;color:#fff;font-size:11.5px;">EN</div>
<div class="a" style="left:1714px;top:1057px;width:0;height:0;border-left:4px solid transparent;border-right:4px solid transparent;border-bottom:5px solid #fff;"></div>
<svg class="a" style="left:1733px;top:1051px" width="18" height="18" viewBox="0 0 18 18"><rect x="0" y="0" width="18" height="18" rx="2" fill="#1a6ad8"/><path d="M3 12 a3 3 0 0 1 1-5.500 a4 4 0 0 1 7.500-1 a3.500 3.500 0 0 1 3.500 6.500z" fill="#f8a818"/><rect x="0" y="13" width="18" height="5" rx="1" fill="#1a4aa8"/></svg>
<svg class="a" style="left:1758px;top:1051px" width="17" height="18" viewBox="0 0 17 18"><path d="M0 0 h17 v15 l-8 3 l-9-3z" fill="#0a3a78"/><text x="8.500" y="13.500" font-family="Liberation Sans,sans-serif" font-size="14" font-weight="bold" fill="#fff" text-anchor="middle">S</text></svg>
<svg class="a" style="left:1782px;top:1050px" width="18" height="20" viewBox="0 0 18 20"><rect x="6" y="6" width="11" height="9" fill="#8aa0b8" stroke="#f4f4f4" stroke-width="1.200"/><path d="M8 18h8M12 15v3" stroke="#f4f4f4" stroke-width="1.400"/><path d="M2 1 v5 h1 v8 h2 v-8 h1 v-5z" fill="#d8d8d8" stroke="#fafafa" stroke-width=".8"/></svg>
<svg class="a" style="left:1805px;top:1051px" width="18" height="18" viewBox="0 0 18 18"><path d="M1 6 h3 l5-4.500 v15 l-5-4.500 h-3z" fill="#f0f0f0" stroke="#fff" stroke-width=".6"/><path d="M11 6 q2 3 0 6 M13 4 q3.500 5 0 10" fill="none" stroke="#fff" stroke-width="1.200"/></svg>
<div class="t c" style="left:1836px;top:1046px;width:62px;color:#fff;font-size:11.5px;letter-spacing:-0.5px;">23:28</div>
<div class="t c" style="left:1836px;top:1062px;width:62px;color:#fff;font-size:11.5px;letter-spacing:-0.5px;">18.06.2014</div>
<div class="a" style="left:1907px;top:1041px;width:13px;height:39px;border-left:1px solid #5a6a80;background:linear-gradient(90deg,#5f7088,#8a9bb4);box-shadow:inset 1px 0 0 rgba(255,255,255,.3);"></div>

</body></html>
